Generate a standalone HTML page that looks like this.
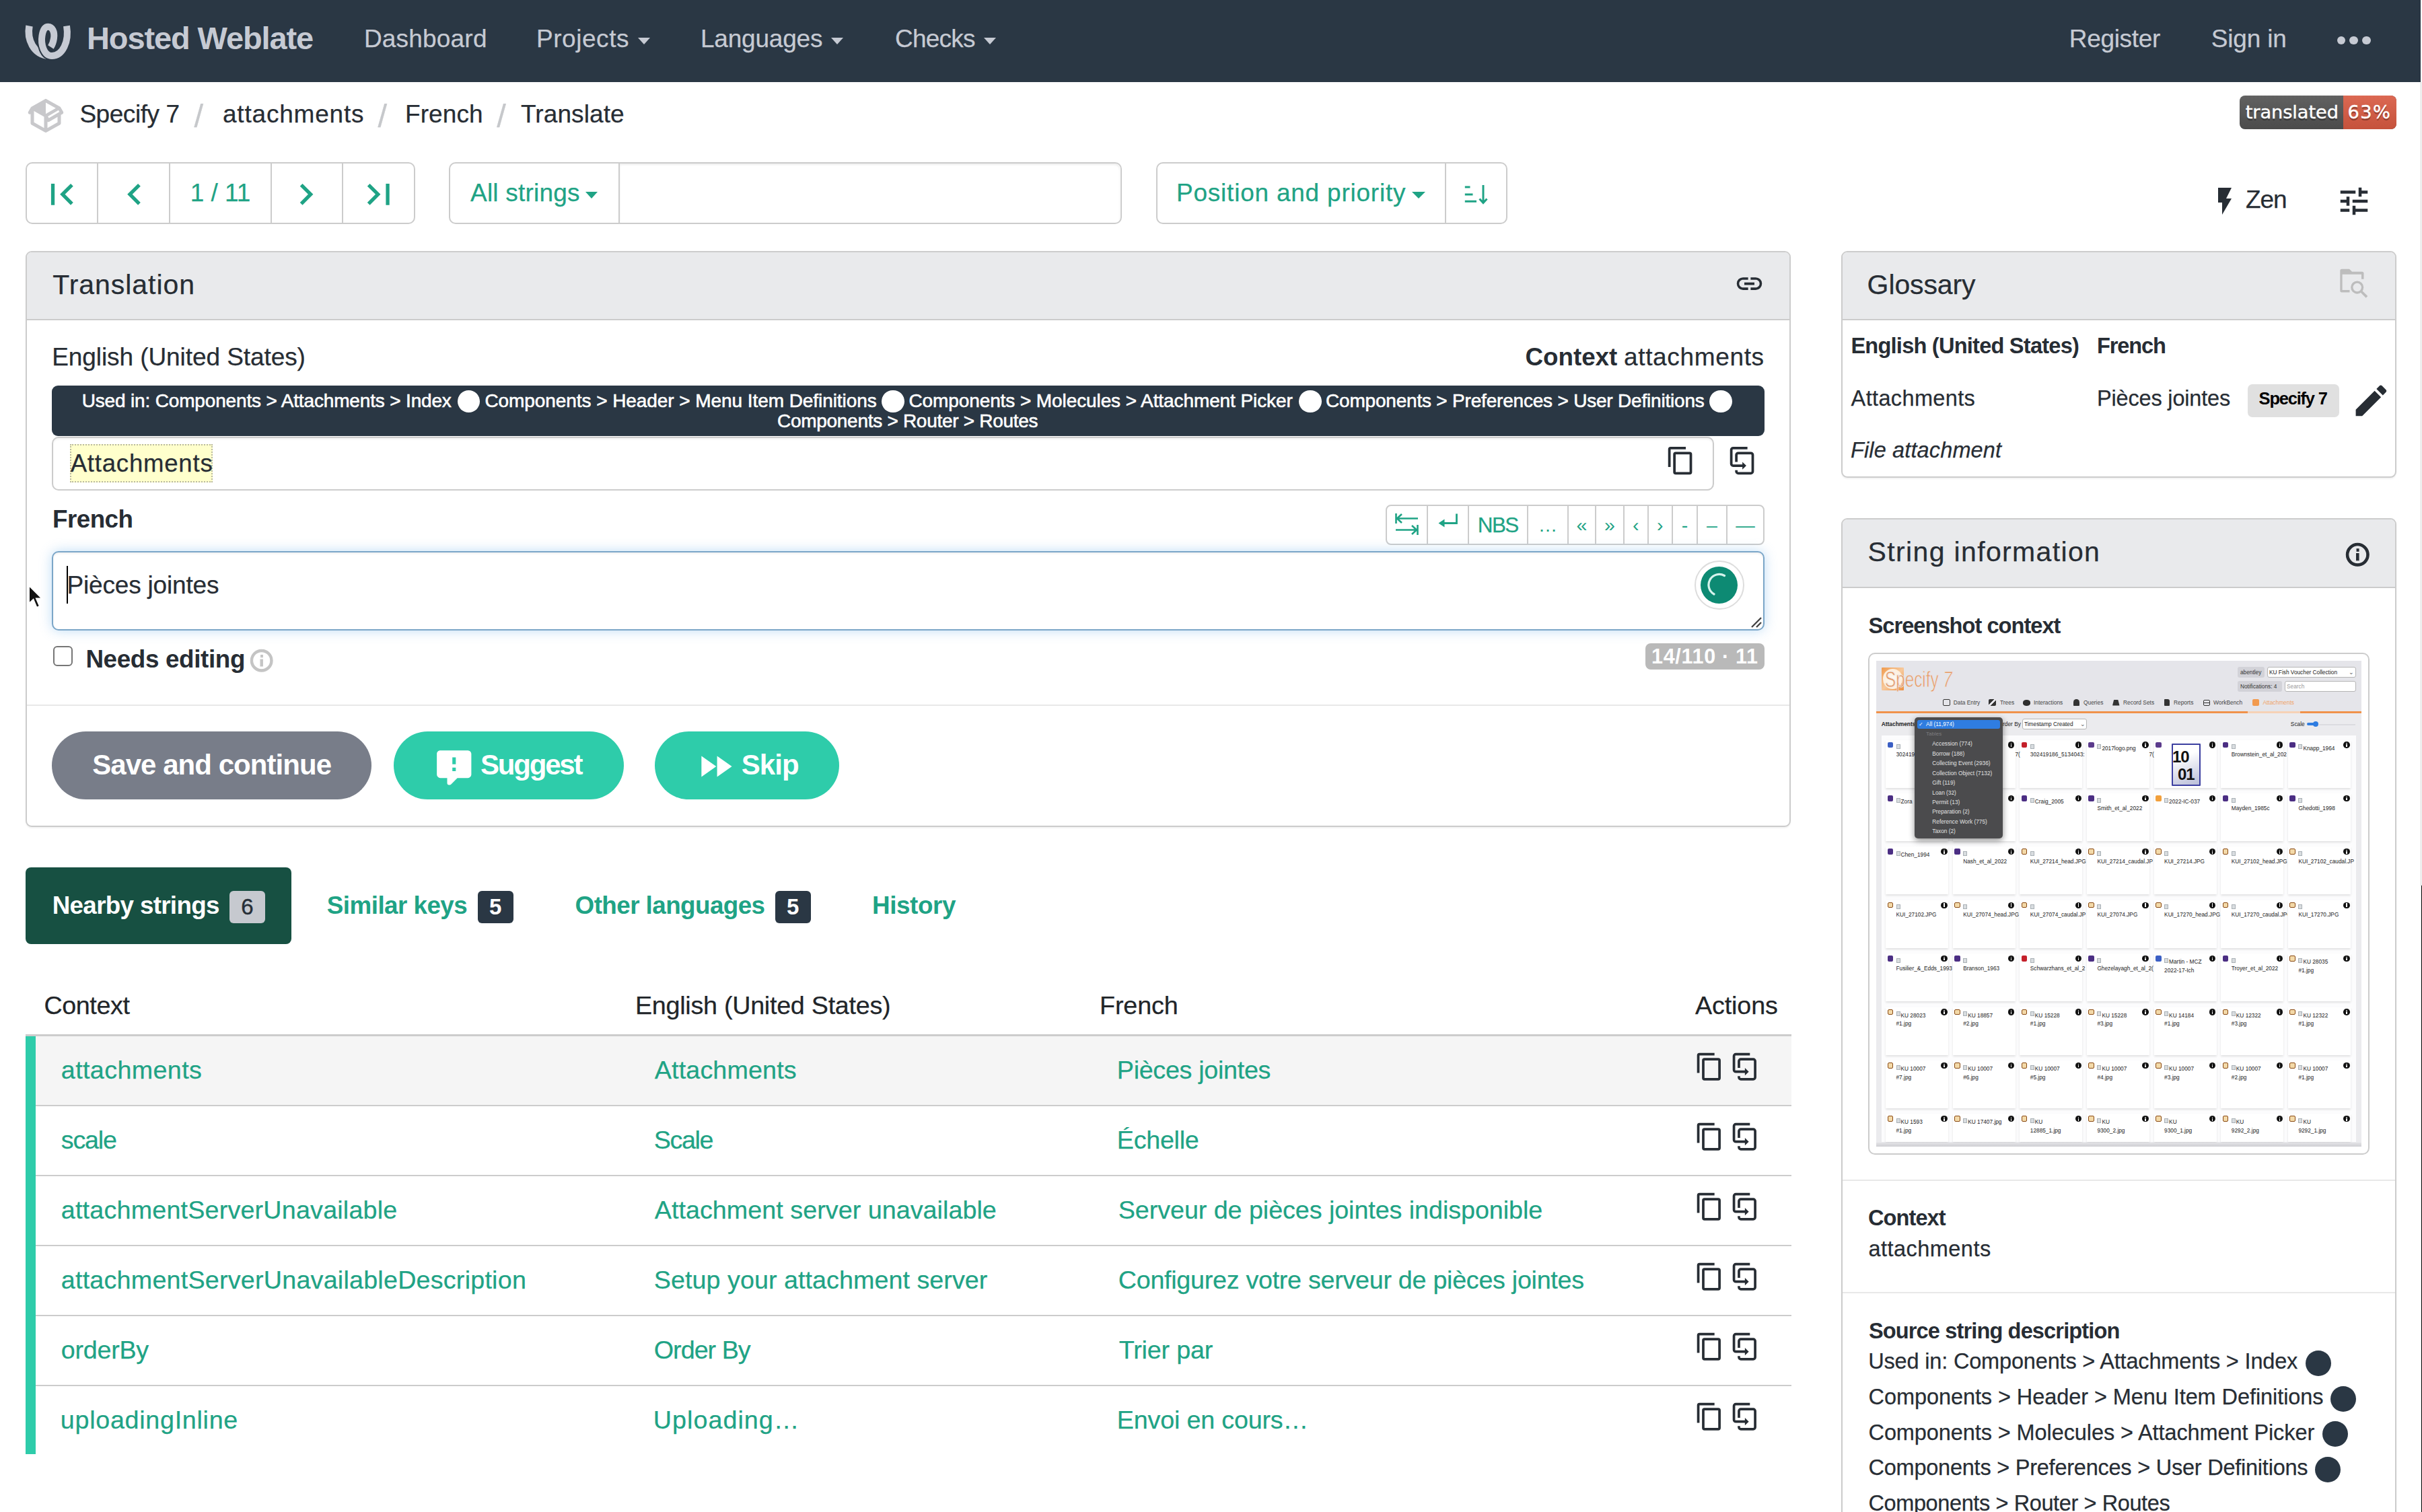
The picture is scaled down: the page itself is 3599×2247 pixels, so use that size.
<!DOCTYPE html><html lang="en"><head><meta charset="utf-8"><title>Specify 7/attachments — French @ Hosted Weblate</title><style>
html,body{margin:0;padding:0}
html{width:3599px;height:2247px;overflow:hidden}
body{width:3599px;height:2247px;position:relative;overflow:hidden;background:#fff;font-family:"Liberation Sans",sans-serif;color:#272d34}
#root{position:absolute;left:0;top:0;width:3599px;height:2247px;overflow:hidden}
.b{position:absolute;display:block}
.t{position:absolute;white-space:pre;display:block}
</style></head><body><div id="root"><div class="b" style="left:0.0px;top:0.0px;width:3597.0px;height:121.5px;background:#2a3744"></div><svg class="b" style="left:25px;top:20px" width="100" height="80" viewBox="0 0 100 80" fill="none" stroke-linecap="butt"><path d="M18.5,18.5 C15,38 24,61 48,63" stroke="#c6cad3" stroke-width="10.5"/><path d="M74,18.5 C78,42 68,63 52,63 C40,63 35.5,45 37.5,33 C39,24 42,19.8 46.5,19.8 C52.5,19.8 56.5,27 55,37 C54.3,42 53,46 50.5,50" stroke="#2a3744" stroke-width="14"/><path d="M74,18.5 C78,42 68,63 52,63 C40,63 35.5,45 37.5,33 C39,24 42,19.8 46.5,19.8 C52.5,19.8 56.5,27 55,37 C54.3,42 53,46 50.5,50" stroke="#c6cad3" stroke-width="10"/></svg><div class="b" style="left:948.0px;top:56.0px;width:0;height:0;border-left:9.5px solid transparent;border-right:9.5px solid transparent;border-top:10.0px solid #c6cad3"></div><div class="b" style="left:1234.5px;top:56.0px;width:0;height:0;border-left:9.5px solid transparent;border-right:9.5px solid transparent;border-top:10.0px solid #c6cad3"></div><div class="b" style="left:1462.0px;top:56.0px;width:0;height:0;border-left:9.5px solid transparent;border-right:9.5px solid transparent;border-top:10.0px solid #c6cad3"></div><div class="b" style="left:3472.7px;top:53.7px;width:12.6px;height:12.6px;background:#c6cad3;border-radius:50%"></div><div class="b" style="left:3491.3px;top:53.7px;width:12.6px;height:12.6px;background:#c6cad3;border-radius:50%"></div><div class="b" style="left:3510.1px;top:53.7px;width:12.6px;height:12.6px;background:#c6cad3;border-radius:50%"></div><svg class="b" style="left:37.9px;top:142.0px;" width="60.0" height="60.0" viewBox="0 0 24 24" fill="#c8c8cb"><path d="M2,10.96C1.5,10.68 1.35,10.07 1.63,9.59L3.13,7C3.24,6.8 3.41,6.66 3.6,6.58L11.43,2.18C11.59,2.06 11.79,2 12,2C12.21,2 12.41,2.06 12.57,2.18L20.47,6.62C20.66,6.72 20.82,6.88 20.91,7.08L22.36,9.6C22.64,10.08 22.47,10.69 22,10.96L21,11.54V16.5C21,16.88 20.79,17.21 20.47,17.38L12.57,21.82C12.41,21.94 12.21,22 12,22C11.79,22 11.59,21.94 11.43,21.82L3.53,17.38C3.21,17.21 3,16.88 3,16.5V10.96C2.7,11.13 2.32,11.14 2,10.96M12,4.15V4.15L12,10.85V10.85L17.96,7.5L12,4.15M5,15.91L11,19.29V12.58L5,9.21V15.91M19,15.91V12.69L14,15.59C13.67,15.77 13.3,15.76 13,15.6V19.29L19,15.91M13.85,13.36L20.13,9.73L19.55,8.72L13.27,12.35L13.85,13.36Z"/></svg><div class="b" style="left:3328px;top:142px;width:233px;height:49.5px;border-radius:8px;overflow:hidden;background:#555"><div style="position:absolute;left:154.3px;top:0;right:0;bottom:0;background:#e05d44"></div><div style="position:absolute;left:0;top:0;right:0;bottom:0;background:linear-gradient(rgba(187,187,187,.12),rgba(0,0,0,.12))"></div></div><div class="b" style="left:38.4px;top:240.5px;width:578.5px;height:92.5px;border:2px solid #ccc;border-radius:10px;background:#fff;box-sizing:border-box"></div><div class="b" style="left:144.0px;top:241.0px;width:2.0px;height:91.5px;background:#ccc"></div><div class="b" style="left:251.0px;top:241.0px;width:2.0px;height:91.5px;background:#ccc"></div><div class="b" style="left:401.6px;top:241.0px;width:2.0px;height:91.5px;background:#ccc"></div><div class="b" style="left:508.0px;top:241.0px;width:2.0px;height:91.5px;background:#ccc"></div><svg class="b" style="left:60.2px;top:256.5px;" width="63.6" height="63.6" viewBox="0 0 24 24" fill="#1fa385"><path d="M18.41,16.59L13.82,12L18.41,7.41L17,6L11,12L17,18L18.41,16.59M6,6H8V18H6V6Z"/></svg><svg class="b" style="left:167.9px;top:256.5px;" width="63.6" height="63.6" viewBox="0 0 24 24" fill="#1fa385"><path d="M15.41,16.58L10.83,12L15.41,7.41L14,6L8,12L14,18L15.41,16.58Z"/></svg><svg class="b" style="left:423.4px;top:256.5px;" width="63.6" height="63.6" viewBox="0 0 24 24" fill="#1fa385"><path d="M8.59,16.58L13.17,12L8.59,7.41L10,6L16,12L10,18L8.59,16.58Z"/></svg><svg class="b" style="left:531.2px;top:256.5px;" width="63.6" height="63.6" viewBox="0 0 24 24" fill="#1fa385"><path d="M5.59,7.41L10.18,12L5.59,16.59L7,18L13,12L7,6L5.59,7.41M16,6H18V18H16V6Z"/></svg><div class="b" style="left:667.0px;top:240.5px;width:999.5px;height:92.5px;border:2px solid #ccc;border-radius:10px;background:#fff;box-sizing:border-box"></div><div class="b" style="left:919.0px;top:241.0px;width:2.0px;height:91.5px;background:#ccc"></div><div class="b" style="left:921.0px;top:242.5px;width:743.0px;height:88.5px;border-radius:0 8px 8px 0;box-shadow:inset 0 2px 3px rgba(0,0,0,.075)"></div><div class="b" style="left:870.0px;top:284.5px;width:0;height:0;border-left:9.5px solid transparent;border-right:9.5px solid transparent;border-top:10.0px solid #1fa385"></div><div class="b" style="left:1717.8px;top:240.5px;width:522.5px;height:92.5px;border:2px solid #ccc;border-radius:10px;background:#fff;box-sizing:border-box"></div><div class="b" style="left:2147.0px;top:241.0px;width:2.0px;height:91.5px;background:#ccc"></div><div class="b" style="left:2098.0px;top:284.5px;width:0;height:0;border-left:10.0px solid transparent;border-right:10.0px solid transparent;border-top:10.0px solid #1fa385"></div><svg class="b" style="left:2170px;top:268px" width="50" height="42" viewBox="0 0 50 42" fill="none" stroke="#1fa385" stroke-width="3"><path d="M6.8,10H14.5M6.8,21H18.5M6.8,31.2H24"/><path d="M34,7V33M28.5,27.5L34,33.5L39.5,27.5" stroke-linejoin="miter"/></svg><svg class="b" style="left:3282.0px;top:275.2px;" width="48.0" height="48.0" viewBox="0 0 24 24" fill="#272d34"><path d="M7,2V13H10V22L17,10H13L17,2H7Z"/></svg><svg class="b" style="left:3471.3px;top:272.0px;" width="54.0" height="54.0" viewBox="0 0 24 24" fill="#272d34"><path d="M3,17V19H9V17H3M3,5V7H13V5H3M13,21V19H21V17H13V15H11V21H13M7,9V11H3V13H7V15H9V9H7M21,13V11H11V13H21M15,9H17V7H21V5H17V3H15V9Z"/></svg><div class="b" style="left:38.0px;top:372.5px;width:2623.0px;height:856.0px;border:2px solid #ccc;border-radius:9px;background:#fff;box-sizing:border-box;box-shadow:0 2px 2px rgba(0,0,0,.05)"></div><div class="b" style="left:40.0px;top:374.5px;width:2619.0px;height:99.0px;background:#e9eaec;border-radius:7px 7px 0 0"></div><div class="b" style="left:40.0px;top:473.5px;width:2619.0px;height:2.0px;background:#ccc"></div><svg class="b" style="left:2577.0px;top:398.8px;" width="45.0" height="45.0" viewBox="0 0 24 24" fill="#272d34"><path d="M3.9,12C3.9,10.29 5.29,8.9 7,8.9H11V7H7A5,5 0 0,0 2,12A5,5 0 0,0 7,17H11V15.1H7C5.29,15.1 3.9,13.71 3.9,12M8,13H16V11H8V13M17,7H13V8.9H17C18.71,8.9 20.1,10.29 20.1,12C20.1,13.71 18.71,15.1 17,15.1H13V17H17A5,5 0 0,0 22,12A5,5 0 0,0 17,7Z"/></svg><div class="b" style="left:77.0px;top:573.0px;width:2545.0px;height:75.0px;background:#2a3744;border-radius:9px"></div><div class="b" style="left:679.8px;top:579.7px;width:33.4px;height:33.4px;background:#fff;border-radius:50%"></div><div class="b" style="left:1310.3px;top:579.7px;width:33.4px;height:33.4px;background:#fff;border-radius:50%"></div><div class="b" style="left:1930.3px;top:579.7px;width:33.4px;height:33.4px;background:#fff;border-radius:50%"></div><div class="b" style="left:2540.3px;top:579.7px;width:33.4px;height:33.4px;background:#fff;border-radius:50%"></div><div class="b" style="left:77.0px;top:648.5px;width:2470.0px;height:80.0px;border:2px solid #ccc;border-radius:10px;background:#fff;box-sizing:border-box;box-shadow:inset 0 2px 3px rgba(0,0,0,.05)"></div><div class="b" style="left:104.2px;top:660.0px;width:211.8px;height:56.6px;background:#ffc;border:2px dotted #b9b9a0;box-sizing:border-box"></div><svg class="b" style="left:2474.9px;top:662.4px;" width="45.0" height="45.0" viewBox="0 0 24 24" fill="#272d34"><path d="M19,21H8V7H19M19,5H8A2,2 0 0,0 6,7V21A2,2 0 0,0 8,23H19A2,2 0 0,0 21,21V7A2,2 0 0,0 19,5M16,1H4A2,2 0 0,0 2,3V17H4V3H16V1Z"/></svg><svg class="b" style="left:2567.0px;top:662.4px;color:#272d34" width="45.0" height="45.0" viewBox="0 0 24 24" fill="#272d34"><g fill="none" stroke="currentColor" stroke-width="2" stroke-linejoin="round" stroke-linecap="butt"><path d="M15.8,2H4.5A1.5,1.5 0 0,0 3,3.5V14.5A1.5,1.5 0 0,0 4.5,16H13"/><path d="M7,13V7.5A1.5,1.5 0 0,1 8.5,6H18.5A1.5,1.5 0 0,1 20,7.5V20.5A1.5,1.5 0 0,1 18.5,22H8.5A1.5,1.5 0 0,1 7,20.5V19.6"/></g><path d="M11.8,13L14.9,16L11.8,19Z" fill="currentColor"/></svg><div class="b" style="left:2058.5px;top:749.5px;width:563.0px;height:60.5px;border:2px solid #ccc;border-radius:8px;background:#fff;box-sizing:border-box"></div><div class="b" style="left:2119.9px;top:750.5px;width:2.0px;height:58.5px;background:#ccc"></div><div class="b" style="left:2180.9px;top:750.5px;width:2.0px;height:58.5px;background:#ccc"></div><div class="b" style="left:2268.9px;top:750.5px;width:2.0px;height:58.5px;background:#ccc"></div><div class="b" style="left:2328.9px;top:750.5px;width:2.0px;height:58.5px;background:#ccc"></div><div class="b" style="left:2369.9px;top:750.5px;width:2.0px;height:58.5px;background:#ccc"></div><div class="b" style="left:2411.9px;top:750.5px;width:2.0px;height:58.5px;background:#ccc"></div><div class="b" style="left:2447.6px;top:750.5px;width:2.0px;height:58.5px;background:#ccc"></div><div class="b" style="left:2484.0px;top:750.5px;width:2.0px;height:58.5px;background:#ccc"></div><div class="b" style="left:2521.0px;top:750.5px;width:2.0px;height:58.5px;background:#ccc"></div><div class="b" style="left:2564.9px;top:750.5px;width:2.0px;height:58.5px;background:#ccc"></div><svg class="b" style="left:2070px;top:760px" width="42" height="38" viewBox="0 0 42 38" fill="none" stroke="#1fa385" stroke-width="2.6"><path d="M4.5,3V18M6,10.5H37M13,4L6,10.5L13,17"/><path d="M36.5,20V35M35,27.5H4M28,21L35,27.5L28,34"/></svg><svg class="b" style="left:2134px;top:760px" width="36" height="30" viewBox="0 0 36 30" fill="none" stroke="#1fa385" stroke-width="2.8"><path d="M30.5,3.5V17.5H6"/></svg><svg class="b" style="left:2134px;top:760px" width="36" height="30" viewBox="0 0 36 30" fill="#1fa385"><path d="M3.5,17.5L12.5,11.5V23.5Z"/></svg><div class="b" style="left:77.0px;top:818.5px;width:2544.5px;height:118.0px;border:2px solid #7ba6c8;border-radius:10px;background:#fff;box-sizing:border-box;box-shadow:inset 0 2px 3px rgba(0,0,0,.06),0 0 18px rgba(102,175,233,.42)"></div><div class="b" style="left:99.0px;top:841.0px;width:2.4px;height:56.0px;background:#000"></div><div class="b" style="left:2517.8px;top:832.5px;width:73.8px;height:73.8px;background:#fff;border:2px solid #ddd;border-radius:50%;box-sizing:border-box"></div><div class="b" style="left:2527.1px;top:841.8px;width:55.2px;height:55.2px;background:#0d8a73;border-radius:50%"></div><svg class="b" style="left:2527.1px;top:841.8px" width="55.2" height="55.2" viewBox="0 0 55.2 55.2" fill="none" stroke="#d5f3ec" stroke-width="3.2" stroke-linecap="round"><path d="M35.5,13.5A15.5,15.5 0 0,0 20,41"/></svg><svg class="b" style="left:2600px;top:915px" width="18" height="18" viewBox="0 0 18 18" stroke="#444" stroke-width="2.4"><path d="M3,17L17,3M10,17L17,10"/></svg><svg class="b" style="left:41px;top:868px" width="24" height="38" viewBox="0 0 24 38"><path d="M2,2V29L8.5,23L13.5,35L18,33L13,21.5H21.5Z" fill="#111" stroke="#fff" stroke-width="2"/></svg><div class="b" style="left:78.5px;top:960.0px;width:29.5px;height:29.5px;border:2.5px solid #767676;border-radius:6px;background:#fff;box-sizing:border-box"></div><svg class="b" style="left:368.5px;top:961.8px;stroke:#c4c4c4;stroke-width:0.7" width="39.4" height="39.4" viewBox="0 0 24 24" fill="#c4c4c4"><path d="M11,9H13V7H11M12,20C7.59,20 4,16.41 4,12C4,7.59 7.59,4 12,4C16.41,4 20,7.59 20,12C20,16.41 16.41,20 12,20M12,2A10,10 0 0,0 2,12A10,10 0 0,0 12,22A10,10 0 0,0 22,12A10,10 0 0,0 12,2M11,17H13V11H11V17Z"/></svg><div class="b" style="left:2445.0px;top:956.3px;width:177.0px;height:39.0px;background:#b9b9b9;border-radius:8px"></div><div class="b" style="left:40.0px;top:1046.8px;width:2619.0px;height:2.0px;background:#e8e8e8"></div><div class="b" style="left:76.8px;top:1086.8px;width:475.0px;height:101.5px;background:#787d89;border-radius:51px"></div><div class="b" style="left:585.0px;top:1086.8px;width:342.0px;height:101.5px;background:#2eccaa;border-radius:51px"></div><svg class="b" style="left:644.0px;top:1110.0px;" width="61.5" height="61.5" viewBox="0 0 24 24" fill="#fff"><path d="M13,10H11V6H13V10M13,14H11V12H13V14M9,22A1,1 0 0,1 8,21V18H4A2,2 0 0,1 2,16V4C2,2.89 2.9,2 4,2H20A2,2 0 0,1 22,4V16A2,2 0 0,1 20,18H13.9L10.2,21.71C10,21.9 9.75,22 9.5,22V22H9Z" fill-rule="evenodd"/></svg><div class="b" style="left:972.7px;top:1086.8px;width:274.6px;height:101.5px;background:#2eccaa;border-radius:51px"></div><svg class="b" style="left:1031.5px;top:1107.5px;" width="62.0" height="62.0" viewBox="0 0 24 24" fill="#fff"><path d="M13,6V18L21.5,12M4,18L12.5,12L4,6V18Z"/></svg><div class="b" style="left:37.8px;top:1289.0px;width:395.2px;height:113.6px;background:#175042;border-radius:8px"></div><div class="b" style="left:341.0px;top:1323.5px;width:53.0px;height:48.5px;background:#c6c9cf;border-radius:6px"></div><div class="b" style="left:710.0px;top:1323.5px;width:52.5px;height:48.5px;background:#2a3744;border-radius:6px"></div><div class="b" style="left:1152.0px;top:1323.5px;width:52.7px;height:48.5px;background:#2a3744;border-radius:6px"></div><div class="b" style="left:38.0px;top:1537.0px;width:2623.5px;height:3.0px;background:#ccc"></div><div class="b" style="left:53.0px;top:1540.0px;width:2608.5px;height:102.0px;background:#f5f5f5"></div><div class="b" style="left:38.0px;top:1641.8px;width:2623.5px;height:2.4px;background:#ccc"></div><div class="b" style="left:38.0px;top:1745.8px;width:2623.5px;height:2.4px;background:#ccc"></div><div class="b" style="left:38.0px;top:1849.8px;width:2623.5px;height:2.4px;background:#ccc"></div><div class="b" style="left:38.0px;top:1953.6px;width:2623.5px;height:2.4px;background:#ccc"></div><div class="b" style="left:38.0px;top:2057.6px;width:2623.5px;height:2.4px;background:#ccc"></div><div class="b" style="left:38.0px;top:1540.0px;width:15.0px;height:621.0px;background:#2eccaa"></div><svg class="b" style="left:2517.5px;top:1562.5px;" width="44.5" height="44.5" viewBox="0 0 24 24" fill="#272d34"><path d="M19,21H8V7H19M19,5H8A2,2 0 0,0 6,7V21A2,2 0 0,0 8,23H19A2,2 0 0,0 21,21V7A2,2 0 0,0 19,5M16,1H4A2,2 0 0,0 2,3V17H4V3H16V1Z"/></svg><svg class="b" style="left:2571.0px;top:1562.5px;color:#272d34" width="44.5" height="44.5" viewBox="0 0 24 24" fill="#272d34"><g fill="none" stroke="currentColor" stroke-width="2" stroke-linejoin="round" stroke-linecap="butt"><path d="M15.8,2H4.5A1.5,1.5 0 0,0 3,3.5V14.5A1.5,1.5 0 0,0 4.5,16H13"/><path d="M7,13V7.5A1.5,1.5 0 0,1 8.5,6H18.5A1.5,1.5 0 0,1 20,7.5V20.5A1.5,1.5 0 0,1 18.5,22H8.5A1.5,1.5 0 0,1 7,20.5V19.6"/></g><path d="M11.8,13L14.9,16L11.8,19Z" fill="currentColor"/></svg><svg class="b" style="left:2517.5px;top:1666.5px;" width="44.5" height="44.5" viewBox="0 0 24 24" fill="#272d34"><path d="M19,21H8V7H19M19,5H8A2,2 0 0,0 6,7V21A2,2 0 0,0 8,23H19A2,2 0 0,0 21,21V7A2,2 0 0,0 19,5M16,1H4A2,2 0 0,0 2,3V17H4V3H16V1Z"/></svg><svg class="b" style="left:2571.0px;top:1666.5px;color:#272d34" width="44.5" height="44.5" viewBox="0 0 24 24" fill="#272d34"><g fill="none" stroke="currentColor" stroke-width="2" stroke-linejoin="round" stroke-linecap="butt"><path d="M15.8,2H4.5A1.5,1.5 0 0,0 3,3.5V14.5A1.5,1.5 0 0,0 4.5,16H13"/><path d="M7,13V7.5A1.5,1.5 0 0,1 8.5,6H18.5A1.5,1.5 0 0,1 20,7.5V20.5A1.5,1.5 0 0,1 18.5,22H8.5A1.5,1.5 0 0,1 7,20.5V19.6"/></g><path d="M11.8,13L14.9,16L11.8,19Z" fill="currentColor"/></svg><svg class="b" style="left:2517.5px;top:1770.5px;" width="44.5" height="44.5" viewBox="0 0 24 24" fill="#272d34"><path d="M19,21H8V7H19M19,5H8A2,2 0 0,0 6,7V21A2,2 0 0,0 8,23H19A2,2 0 0,0 21,21V7A2,2 0 0,0 19,5M16,1H4A2,2 0 0,0 2,3V17H4V3H16V1Z"/></svg><svg class="b" style="left:2571.0px;top:1770.5px;color:#272d34" width="44.5" height="44.5" viewBox="0 0 24 24" fill="#272d34"><g fill="none" stroke="currentColor" stroke-width="2" stroke-linejoin="round" stroke-linecap="butt"><path d="M15.8,2H4.5A1.5,1.5 0 0,0 3,3.5V14.5A1.5,1.5 0 0,0 4.5,16H13"/><path d="M7,13V7.5A1.5,1.5 0 0,1 8.5,6H18.5A1.5,1.5 0 0,1 20,7.5V20.5A1.5,1.5 0 0,1 18.5,22H8.5A1.5,1.5 0 0,1 7,20.5V19.6"/></g><path d="M11.8,13L14.9,16L11.8,19Z" fill="currentColor"/></svg><svg class="b" style="left:2517.5px;top:1874.5px;" width="44.5" height="44.5" viewBox="0 0 24 24" fill="#272d34"><path d="M19,21H8V7H19M19,5H8A2,2 0 0,0 6,7V21A2,2 0 0,0 8,23H19A2,2 0 0,0 21,21V7A2,2 0 0,0 19,5M16,1H4A2,2 0 0,0 2,3V17H4V3H16V1Z"/></svg><svg class="b" style="left:2571.0px;top:1874.5px;color:#272d34" width="44.5" height="44.5" viewBox="0 0 24 24" fill="#272d34"><g fill="none" stroke="currentColor" stroke-width="2" stroke-linejoin="round" stroke-linecap="butt"><path d="M15.8,2H4.5A1.5,1.5 0 0,0 3,3.5V14.5A1.5,1.5 0 0,0 4.5,16H13"/><path d="M7,13V7.5A1.5,1.5 0 0,1 8.5,6H18.5A1.5,1.5 0 0,1 20,7.5V20.5A1.5,1.5 0 0,1 18.5,22H8.5A1.5,1.5 0 0,1 7,20.5V19.6"/></g><path d="M11.8,13L14.9,16L11.8,19Z" fill="currentColor"/></svg><svg class="b" style="left:2517.5px;top:1978.5px;" width="44.5" height="44.5" viewBox="0 0 24 24" fill="#272d34"><path d="M19,21H8V7H19M19,5H8A2,2 0 0,0 6,7V21A2,2 0 0,0 8,23H19A2,2 0 0,0 21,21V7A2,2 0 0,0 19,5M16,1H4A2,2 0 0,0 2,3V17H4V3H16V1Z"/></svg><svg class="b" style="left:2571.0px;top:1978.5px;color:#272d34" width="44.5" height="44.5" viewBox="0 0 24 24" fill="#272d34"><g fill="none" stroke="currentColor" stroke-width="2" stroke-linejoin="round" stroke-linecap="butt"><path d="M15.8,2H4.5A1.5,1.5 0 0,0 3,3.5V14.5A1.5,1.5 0 0,0 4.5,16H13"/><path d="M7,13V7.5A1.5,1.5 0 0,1 8.5,6H18.5A1.5,1.5 0 0,1 20,7.5V20.5A1.5,1.5 0 0,1 18.5,22H8.5A1.5,1.5 0 0,1 7,20.5V19.6"/></g><path d="M11.8,13L14.9,16L11.8,19Z" fill="currentColor"/></svg><svg class="b" style="left:2517.5px;top:2082.5px;" width="44.5" height="44.5" viewBox="0 0 24 24" fill="#272d34"><path d="M19,21H8V7H19M19,5H8A2,2 0 0,0 6,7V21A2,2 0 0,0 8,23H19A2,2 0 0,0 21,21V7A2,2 0 0,0 19,5M16,1H4A2,2 0 0,0 2,3V17H4V3H16V1Z"/></svg><svg class="b" style="left:2571.0px;top:2082.5px;color:#272d34" width="44.5" height="44.5" viewBox="0 0 24 24" fill="#272d34"><g fill="none" stroke="currentColor" stroke-width="2" stroke-linejoin="round" stroke-linecap="butt"><path d="M15.8,2H4.5A1.5,1.5 0 0,0 3,3.5V14.5A1.5,1.5 0 0,0 4.5,16H13"/><path d="M7,13V7.5A1.5,1.5 0 0,1 8.5,6H18.5A1.5,1.5 0 0,1 20,7.5V20.5A1.5,1.5 0 0,1 18.5,22H8.5A1.5,1.5 0 0,1 7,20.5V19.6"/></g><path d="M11.8,13L14.9,16L11.8,19Z" fill="currentColor"/></svg><div class="b" style="left:2736.0px;top:372.5px;width:825.0px;height:337.5px;border:2px solid #ccc;border-radius:9px;background:#fff;box-sizing:border-box;box-shadow:0 2px 2px rgba(0,0,0,.05)"></div><div class="b" style="left:2738.0px;top:374.5px;width:821.0px;height:99.0px;background:#e9eaec;border-radius:7px 7px 0 0"></div><div class="b" style="left:2738.0px;top:473.5px;width:821.0px;height:2.0px;background:#ccc"></div><svg class="b" style="left:3474px;top:396px" width="48" height="48" viewBox="0 0 48 48" fill="none" stroke="#bdbdbd"><path fill="#bdbdbd" stroke="none" d="M3.3,6.2A2.5,2.5 0 0,1 5.8,3.7H17L21,7.7H36A2.5,2.5 0 0,1 38.5,10.2V18.7H35V11.7H6.6V35H17.5V38.4H5.8A2.5,2.5 0 0,1 3.3,35.9Z"/><circle cx="28.7" cy="31.1" r="7.9" stroke-width="3.3"/><path d="M34.3,36.7L43,45.4" stroke-width="3.7"/></svg><div class="b" style="left:3340.2px;top:570.8px;width:135.8px;height:49.0px;background:#e0e0e0;border-radius:7px"></div><svg class="b" style="left:3492.7px;top:564.6px;" width="60.8" height="60.8" viewBox="0 0 24 24" fill="#272d34"><path d="M20.71,7.04C21.1,6.65 21.1,6 20.71,5.63L18.37,3.29C18,2.9 17.35,2.9 16.96,3.29L15.12,5.12L18.87,8.87M3,17.25V21H6.75L17.81,9.93L14.06,6.18L3,17.25Z"/></svg><div class="b" style="left:2736.0px;top:770.0px;width:825.0px;height:1477.0px;border:2px solid #ccc;border-radius:9px;background:#fff;box-sizing:border-box;box-shadow:0 2px 2px rgba(0,0,0,.05);border-bottom:none;border-radius:9px 9px 0 0"></div><div class="b" style="left:2738.0px;top:772.0px;width:821.0px;height:100.0px;background:#e9eaec;border-radius:7px 7px 0 0"></div><div class="b" style="left:2738.0px;top:872.0px;width:821.0px;height:2.0px;background:#ccc"></div><svg class="b" style="left:3483.1px;top:804.1px;stroke:#272d34;stroke-width:0.7" width="40.6" height="40.6" viewBox="0 0 24 24" fill="#272d34"><path d="M11,9H13V7H11M12,20C7.59,20 4,16.41 4,12C4,7.59 7.59,4 12,4C16.41,4 20,7.59 20,12C20,16.41 16.41,20 12,20M12,2A10,10 0 0,0 2,12A10,10 0 0,0 12,22A10,10 0 0,0 22,12A10,10 0 0,0 12,2M11,17H13V11H11V17Z"/></svg><div class="b" style="left:2776.0px;top:970.0px;width:745.0px;height:746.0px;border:2px solid #ccc;border-radius:10px;background:#fff;box-sizing:border-box"></div><div class="b" style="left:2788px;top:982px;width:721px;height:722px;overflow:hidden;background:#ebebee;font-family:"Liberation Sans",sans-serif;"><div style="position:absolute;left:0.0px;top:0.0px;width:721.0px;height:76.0px;background:#e5e5ea"></div><div style="position:absolute;left:0.0px;top:78.0px;width:721.0px;height:644.0px;background:#ebebee"></div><div style="position:absolute;left:7.7px;top:10.0px;width:33.7px;height:34.0px;background:linear-gradient(135deg,#f09a4c,#f7c99c 50%,#ee8f3f);border-radius:1px"></div><div style="position:absolute;left:9.7px;top:12.0px;width:29.7px;height:30.0px;background:radial-gradient(circle,#fffaf3 0,#fdeedd 70%,#f9dcbd 100%);border-radius:50%"></div><span style="position:absolute;left:13.0px;top:8.5px;font-size:33px;line-height:38px;color:#e8935a;white-space:pre;transform-origin:0 50%;transform:scaleX(.735);-webkit-text-stroke:0.9px #e9e4e2">Specify <i>7</i></span><div style="position:absolute;left:537.0px;top:8.7px;width:40.0px;height:16.5px;background:#d2d2d8;border-radius:3px"></div><span style="position:absolute;left:541.0px;top:12.0px;font-size:8.3px;line-height:10.0px;color:#333;white-space:pre;">abentley</span><div style="position:absolute;left:581.0px;top:8.7px;width:132.0px;height:16.5px;background:#fff;border:1px solid #b5b5b5;border-radius:3px;box-sizing:border-box"></div><span style="position:absolute;left:584.0px;top:12.0px;font-size:8.3px;line-height:10.0px;color:#222;white-space:pre;">KU Fish Voucher Collection</span><span style="position:absolute;left:702.0px;top:11.6px;font-size:9px;line-height:10.8px;color:#555;white-space:pre;">⌄</span><div style="position:absolute;left:537.0px;top:29.5px;width:66.0px;height:16.5px;background:#d2d2d8;border-radius:3px"></div><span style="position:absolute;left:541.0px;top:32.8px;font-size:8.3px;line-height:10.0px;color:#333;white-space:pre;">Notifications: 4</span><div style="position:absolute;left:607.0px;top:29.5px;width:106.0px;height:16.5px;background:#fff;border:1px solid #b5b5b5;border-radius:3px;box-sizing:border-box"></div><span style="position:absolute;left:610.0px;top:32.8px;font-size:8.3px;line-height:10.0px;color:#999;white-space:pre;">Search</span><div style="position:absolute;left:99.0px;top:57.0px;width:10.5px;height:10.0px;border:1.6px solid #333;border-radius:2px;box-sizing:border-box;background:transparent"></div><span style="position:absolute;left:114.7px;top:57.0px;font-size:8.4px;line-height:10.1px;color:#444;white-space:pre;">Data Entry</span><div style="position:absolute;left:167.0px;top:57.0px;width:10.5px;height:10.0px;background:linear-gradient(135deg,#333 0 42%,transparent 42% 58%,#333 58%);border-radius:2px"></div><span style="position:absolute;left:184.0px;top:57.0px;font-size:8.4px;line-height:10.1px;color:#444;white-space:pre;">Trees</span><div style="position:absolute;left:218.0px;top:57.0px;width:10.5px;height:8.5px;background:#2e2e2e;border-radius:50%/45%;top:58.0px"></div><span style="position:absolute;left:234.0px;top:57.0px;font-size:8.4px;line-height:10.1px;color:#444;white-space:pre;">Interactions</span><div style="position:absolute;left:292.6px;top:57.0px;width:9.0px;height:10.0px;background:#333;border-radius:5px 5px 1px 1px"></div><span style="position:absolute;left:308.0px;top:57.0px;font-size:8.4px;line-height:10.1px;color:#444;white-space:pre;">Queries</span><div style="position:absolute;left:351.0px;top:57.0px;width:10.5px;height:8.5px;background:#333;border-radius:3px 3px 1px 1px;clip-path:polygon(20% 0,80% 0,100% 100%,0 100%);top:58.0px"></div><span style="position:absolute;left:367.0px;top:57.0px;font-size:8.4px;line-height:10.1px;color:#444;white-space:pre;">Record Sets</span><div style="position:absolute;left:427.6px;top:57.0px;width:8.0px;height:10.0px;background:#333;border-radius:1px 3px 1px 1px"></div><span style="position:absolute;left:442.0px;top:57.0px;font-size:8.4px;line-height:10.1px;color:#444;white-space:pre;">Reports</span><div style="position:absolute;left:485.6px;top:57.0px;width:10.5px;height:8.5px;border:1.6px solid #333;border-radius:2px;box-sizing:border-box;background:linear-gradient(#333,#333) 50% 50%/100% 1.4px no-repeat;top:58.0px"></div><span style="position:absolute;left:501.0px;top:57.0px;font-size:8.4px;line-height:10.1px;color:#444;white-space:pre;">WorkBench</span><div style="position:absolute;left:558.7px;top:57.0px;width:10.0px;height:10.0px;background:#f29a4e;border-radius:2px"></div><span style="position:absolute;left:574.4px;top:57.0px;font-size:8.4px;line-height:10.1px;color:#f0a468;white-space:pre;">Attachments</span><div style="position:absolute;left:0.0px;top:75.0px;width:721.0px;height:3.0px;background:#f0924a"></div><div style="position:absolute;left:552.0px;top:75.0px;width:78.0px;height:3.0px;background:#f6d2b6"></div><span style="position:absolute;left:7.7px;top:89.0px;font-size:8.4px;line-height:10.1px;color:#222;white-space:pre;font-weight:700">Attachments</span><span style="position:absolute;left:188.0px;top:89.0px;font-size:8.4px;line-height:10.1px;color:#222;white-space:pre;">rder By</span><div style="position:absolute;left:217.0px;top:86.0px;width:96.0px;height:16.0px;background:#fff;border:1px solid #b5b5b5;border-radius:3px;box-sizing:border-box"></div><span style="position:absolute;left:220.0px;top:89.0px;font-size:8.3px;line-height:10.0px;color:#222;white-space:pre;">Timestamp Created</span><span style="position:absolute;left:303.0px;top:88.6px;font-size:9px;line-height:10.8px;color:#555;white-space:pre;">⌄</span><span style="position:absolute;left:615.8px;top:89.0px;font-size:8.4px;line-height:10.1px;color:#222;white-space:pre;">Scale</span><div style="position:absolute;left:658.0px;top:94.0px;width:54.0px;height:1.5px;background:#dcdce0"></div><div style="position:absolute;left:640.0px;top:92.0px;width:14.0px;height:4.0px;background:#2f7de1;border-radius:2px"></div><div style="position:absolute;left:649.0px;top:90.0px;width:8.0px;height:8.0px;background:#2f7de1;border-radius:50%"></div><div style="position:absolute;left:7.7px;top:111.4px;width:705.5px;height:604.0px;background:#fcfcfd"></div><div style="position:absolute;left:14.0px;top:117.6px;width:93.0px;height:71.0px;background:#fff;box-shadow:0 2px 3px rgba(0,0,0,.11)"></div><div style="position:absolute;left:16.5px;top:120.6px;width:8.5px;height:8.5px;background:#3b5fc4;border-radius:2px"></div><div style="position:absolute;left:96.3px;top:120.3px;width:9.4px;height:9.4px;background:#111;border-radius:50%"></div><div style="position:absolute;left:100.4px;top:122.2px;width:1.3px;height:1.3px;background:#fff"></div><div style="position:absolute;left:100.4px;top:124.2px;width:1.3px;height:3.6px;background:#fff"></div><div style="position:absolute;left:29.5px;top:124.1px;width:6.0px;height:7.0px;background:#d9dde0;border:1px solid #a9b0b5;box-sizing:border-box"></div><span style="position:absolute;left:29.5px;top:134.1px;width:83.5px;overflow:hidden;font-size:8.3px;line-height:10px;color:#222;white-space:pre">302419</span><div style="position:absolute;left:113.7px;top:117.6px;width:93.0px;height:71.0px;background:#fff;box-shadow:0 2px 3px rgba(0,0,0,.11)"></div><div style="position:absolute;left:196.0px;top:120.3px;width:9.4px;height:9.4px;background:#111;border-radius:50%"></div><div style="position:absolute;left:200.1px;top:122.2px;width:1.3px;height:1.3px;background:#fff"></div><div style="position:absolute;left:200.1px;top:124.2px;width:1.3px;height:3.6px;background:#fff"></div><div style="position:absolute;left:213.3px;top:117.6px;width:93.0px;height:71.0px;background:#fff;box-shadow:0 2px 3px rgba(0,0,0,.11)"></div><div style="position:absolute;left:215.8px;top:120.6px;width:8.5px;height:8.5px;background:#c4202b;border-radius:2px"></div><div style="position:absolute;left:295.6px;top:120.3px;width:9.4px;height:9.4px;background:#111;border-radius:50%"></div><div style="position:absolute;left:299.7px;top:122.2px;width:1.3px;height:1.3px;background:#fff"></div><div style="position:absolute;left:299.7px;top:124.2px;width:1.3px;height:3.6px;background:#fff"></div><div style="position:absolute;left:228.8px;top:124.1px;width:6.0px;height:7.0px;background:#d9dde0;border:1px solid #a9b0b5;box-sizing:border-box"></div><span style="position:absolute;left:228.8px;top:134.1px;width:83.5px;overflow:hidden;font-size:8.3px;line-height:10px;color:#222;white-space:pre">302419186_5134043:</span><div style="position:absolute;left:312.9px;top:117.6px;width:93.0px;height:71.0px;background:#fff;box-shadow:0 2px 3px rgba(0,0,0,.11)"></div><div style="position:absolute;left:315.4px;top:120.6px;width:8.5px;height:8.5px;background:#5b3b8c;border-radius:2px"></div><div style="position:absolute;left:395.2px;top:120.3px;width:9.4px;height:9.4px;background:#111;border-radius:50%"></div><div style="position:absolute;left:399.3px;top:122.2px;width:1.3px;height:1.3px;background:#fff"></div><div style="position:absolute;left:399.3px;top:124.2px;width:1.3px;height:3.6px;background:#fff"></div><div style="position:absolute;left:328.4px;top:124.1px;width:6.0px;height:7.0px;background:#d9dde0;border:1px solid #a9b0b5;box-sizing:border-box"></div><span style="position:absolute;left:335.4px;top:124.6px;font-size:8.3px;line-height:10.0px;color:#222;white-space:pre;">2017logo.png</span><div style="position:absolute;left:412.6px;top:117.6px;width:93.0px;height:71.0px;background:#fff;box-shadow:0 2px 3px rgba(0,0,0,.11)"></div><div style="position:absolute;left:415.1px;top:120.6px;width:8.5px;height:8.5px;background:#5b3b8c;border-radius:2px"></div><div style="position:absolute;left:494.9px;top:120.3px;width:9.4px;height:9.4px;background:#111;border-radius:50%"></div><div style="position:absolute;left:499.0px;top:122.2px;width:1.3px;height:1.3px;background:#fff"></div><div style="position:absolute;left:499.0px;top:124.2px;width:1.3px;height:3.6px;background:#fff"></div><div style="position:absolute;left:512.2px;top:117.6px;width:93.0px;height:71.0px;background:#fff;box-shadow:0 2px 3px rgba(0,0,0,.11)"></div><div style="position:absolute;left:514.8px;top:120.6px;width:8.5px;height:8.5px;background:#4b2e83;border-radius:2px"></div><div style="position:absolute;left:594.6px;top:120.3px;width:9.4px;height:9.4px;background:#111;border-radius:50%"></div><div style="position:absolute;left:598.7px;top:122.2px;width:1.3px;height:1.3px;background:#fff"></div><div style="position:absolute;left:598.7px;top:124.2px;width:1.3px;height:3.6px;background:#fff"></div><div style="position:absolute;left:527.8px;top:124.1px;width:6.0px;height:7.0px;background:#d9dde0;border:1px solid #a9b0b5;box-sizing:border-box"></div><span style="position:absolute;left:527.8px;top:134.1px;width:83.5px;overflow:hidden;font-size:8.3px;line-height:10px;color:#222;white-space:pre">Brownstein_et_al_202</span><div style="position:absolute;left:611.9px;top:117.6px;width:93.0px;height:71.0px;background:#fff;box-shadow:0 2px 3px rgba(0,0,0,.11)"></div><div style="position:absolute;left:614.4px;top:120.6px;width:8.5px;height:8.5px;background:#4b2e83;border-radius:2px"></div><div style="position:absolute;left:694.2px;top:120.3px;width:9.4px;height:9.4px;background:#111;border-radius:50%"></div><div style="position:absolute;left:698.3px;top:122.2px;width:1.3px;height:1.3px;background:#fff"></div><div style="position:absolute;left:698.3px;top:124.2px;width:1.3px;height:3.6px;background:#fff"></div><div style="position:absolute;left:627.4px;top:124.1px;width:6.0px;height:7.0px;background:#d9dde0;border:1px solid #a9b0b5;box-sizing:border-box"></div><span style="position:absolute;left:634.4px;top:124.6px;font-size:8.3px;line-height:10.0px;color:#222;white-space:pre;">Knapp_1964</span><div style="position:absolute;left:14.0px;top:197.0px;width:93.0px;height:71.0px;background:#fff;box-shadow:0 2px 3px rgba(0,0,0,.11)"></div><div style="position:absolute;left:16.5px;top:200.0px;width:8.5px;height:8.5px;background:#4b2e83;border-radius:2px"></div><div style="position:absolute;left:96.3px;top:199.7px;width:9.4px;height:9.4px;background:#111;border-radius:50%"></div><div style="position:absolute;left:100.4px;top:201.6px;width:1.3px;height:1.3px;background:#fff"></div><div style="position:absolute;left:100.4px;top:203.6px;width:1.3px;height:3.6px;background:#fff"></div><div style="position:absolute;left:29.5px;top:203.5px;width:6.0px;height:7.0px;background:#d9dde0;border:1px solid #a9b0b5;box-sizing:border-box"></div><span style="position:absolute;left:36.5px;top:204.0px;font-size:8.3px;line-height:10.0px;color:#222;white-space:pre;">Zora</span><div style="position:absolute;left:113.7px;top:197.0px;width:93.0px;height:71.0px;background:#fff;box-shadow:0 2px 3px rgba(0,0,0,.11)"></div><div style="position:absolute;left:196.0px;top:199.7px;width:9.4px;height:9.4px;background:#111;border-radius:50%"></div><div style="position:absolute;left:200.1px;top:201.6px;width:1.3px;height:1.3px;background:#fff"></div><div style="position:absolute;left:200.1px;top:203.6px;width:1.3px;height:3.6px;background:#fff"></div><div style="position:absolute;left:213.3px;top:197.0px;width:93.0px;height:71.0px;background:#fff;box-shadow:0 2px 3px rgba(0,0,0,.11)"></div><div style="position:absolute;left:215.8px;top:200.0px;width:8.5px;height:8.5px;background:#4b2e83;border-radius:2px"></div><div style="position:absolute;left:295.6px;top:199.7px;width:9.4px;height:9.4px;background:#111;border-radius:50%"></div><div style="position:absolute;left:299.7px;top:201.6px;width:1.3px;height:1.3px;background:#fff"></div><div style="position:absolute;left:299.7px;top:203.6px;width:1.3px;height:3.6px;background:#fff"></div><div style="position:absolute;left:228.8px;top:203.5px;width:6.0px;height:7.0px;background:#d9dde0;border:1px solid #a9b0b5;box-sizing:border-box"></div><span style="position:absolute;left:235.8px;top:204.0px;font-size:8.3px;line-height:10.0px;color:#222;white-space:pre;">Craig_2005</span><div style="position:absolute;left:312.9px;top:197.0px;width:93.0px;height:71.0px;background:#fff;box-shadow:0 2px 3px rgba(0,0,0,.11)"></div><div style="position:absolute;left:315.4px;top:200.0px;width:8.5px;height:8.5px;background:#4b2e83;border-radius:2px"></div><div style="position:absolute;left:395.2px;top:199.7px;width:9.4px;height:9.4px;background:#111;border-radius:50%"></div><div style="position:absolute;left:399.3px;top:201.6px;width:1.3px;height:1.3px;background:#fff"></div><div style="position:absolute;left:399.3px;top:203.6px;width:1.3px;height:3.6px;background:#fff"></div><div style="position:absolute;left:328.4px;top:203.5px;width:6.0px;height:7.0px;background:#d9dde0;border:1px solid #a9b0b5;box-sizing:border-box"></div><span style="position:absolute;left:328.4px;top:213.5px;width:83.5px;overflow:hidden;font-size:8.3px;line-height:10px;color:#222;white-space:pre">Smith_et_al_2022</span><div style="position:absolute;left:412.6px;top:197.0px;width:93.0px;height:71.0px;background:#fff;box-shadow:0 2px 3px rgba(0,0,0,.11)"></div><div style="position:absolute;left:415.1px;top:200.0px;width:8.5px;height:8.5px;background:#f2a03c;border-radius:2px"></div><div style="position:absolute;left:494.9px;top:199.7px;width:9.4px;height:9.4px;background:#111;border-radius:50%"></div><div style="position:absolute;left:499.0px;top:201.6px;width:1.3px;height:1.3px;background:#fff"></div><div style="position:absolute;left:499.0px;top:203.6px;width:1.3px;height:3.6px;background:#fff"></div><div style="position:absolute;left:428.1px;top:203.5px;width:6.0px;height:7.0px;background:#d9dde0;border:1px solid #a9b0b5;box-sizing:border-box"></div><span style="position:absolute;left:435.1px;top:204.0px;font-size:8.3px;line-height:10.0px;color:#222;white-space:pre;">2022-IC-037</span><div style="position:absolute;left:512.2px;top:197.0px;width:93.0px;height:71.0px;background:#fff;box-shadow:0 2px 3px rgba(0,0,0,.11)"></div><div style="position:absolute;left:514.8px;top:200.0px;width:8.5px;height:8.5px;background:#4b2e83;border-radius:2px"></div><div style="position:absolute;left:594.6px;top:199.7px;width:9.4px;height:9.4px;background:#111;border-radius:50%"></div><div style="position:absolute;left:598.7px;top:201.6px;width:1.3px;height:1.3px;background:#fff"></div><div style="position:absolute;left:598.7px;top:203.6px;width:1.3px;height:3.6px;background:#fff"></div><div style="position:absolute;left:527.8px;top:203.5px;width:6.0px;height:7.0px;background:#d9dde0;border:1px solid #a9b0b5;box-sizing:border-box"></div><span style="position:absolute;left:527.8px;top:213.5px;width:83.5px;overflow:hidden;font-size:8.3px;line-height:10px;color:#222;white-space:pre">Mayden_1985c</span><div style="position:absolute;left:611.9px;top:197.0px;width:93.0px;height:71.0px;background:#fff;box-shadow:0 2px 3px rgba(0,0,0,.11)"></div><div style="position:absolute;left:614.4px;top:200.0px;width:8.5px;height:8.5px;background:#4b2e83;border-radius:2px"></div><div style="position:absolute;left:694.2px;top:199.7px;width:9.4px;height:9.4px;background:#111;border-radius:50%"></div><div style="position:absolute;left:698.3px;top:201.6px;width:1.3px;height:1.3px;background:#fff"></div><div style="position:absolute;left:698.3px;top:203.6px;width:1.3px;height:3.6px;background:#fff"></div><div style="position:absolute;left:627.4px;top:203.5px;width:6.0px;height:7.0px;background:#d9dde0;border:1px solid #a9b0b5;box-sizing:border-box"></div><span style="position:absolute;left:627.4px;top:213.5px;width:83.5px;overflow:hidden;font-size:8.3px;line-height:10px;color:#222;white-space:pre">Ghedotti_1998</span><div style="position:absolute;left:14.0px;top:276.4px;width:93.0px;height:71.0px;background:#fff;box-shadow:0 2px 3px rgba(0,0,0,.11)"></div><div style="position:absolute;left:16.5px;top:279.4px;width:8.5px;height:8.5px;background:#4b2e83;border-radius:2px"></div><div style="position:absolute;left:96.3px;top:279.1px;width:9.4px;height:9.4px;background:#111;border-radius:50%"></div><div style="position:absolute;left:100.4px;top:281.0px;width:1.3px;height:1.3px;background:#fff"></div><div style="position:absolute;left:100.4px;top:283.0px;width:1.3px;height:3.6px;background:#fff"></div><div style="position:absolute;left:29.5px;top:282.9px;width:6.0px;height:7.0px;background:#d9dde0;border:1px solid #a9b0b5;box-sizing:border-box"></div><span style="position:absolute;left:36.5px;top:283.4px;font-size:8.3px;line-height:10.0px;color:#222;white-space:pre;">Chen_1994</span><div style="position:absolute;left:113.7px;top:276.4px;width:93.0px;height:71.0px;background:#fff;box-shadow:0 2px 3px rgba(0,0,0,.11)"></div><div style="position:absolute;left:116.2px;top:279.4px;width:8.5px;height:8.5px;background:#4b2e83;border-radius:2px"></div><div style="position:absolute;left:196.0px;top:279.1px;width:9.4px;height:9.4px;background:#111;border-radius:50%"></div><div style="position:absolute;left:200.1px;top:281.0px;width:1.3px;height:1.3px;background:#fff"></div><div style="position:absolute;left:200.1px;top:283.0px;width:1.3px;height:3.6px;background:#fff"></div><div style="position:absolute;left:129.2px;top:282.9px;width:6.0px;height:7.0px;background:#d9dde0;border:1px solid #a9b0b5;box-sizing:border-box"></div><span style="position:absolute;left:129.2px;top:292.9px;width:83.5px;overflow:hidden;font-size:8.3px;line-height:10px;color:#222;white-space:pre">Nash_et_al_2022</span><div style="position:absolute;left:213.3px;top:276.4px;width:93.0px;height:71.0px;background:#fff;box-shadow:0 2px 3px rgba(0,0,0,.11)"></div><div style="position:absolute;left:215.8px;top:279.4px;width:8.5px;height:8.5px;background:#f3d9a8;border:1.6px solid #8a4a14;border-radius:2px;box-sizing:border-box"></div><div style="position:absolute;left:295.6px;top:279.1px;width:9.4px;height:9.4px;background:#111;border-radius:50%"></div><div style="position:absolute;left:299.7px;top:281.0px;width:1.3px;height:1.3px;background:#fff"></div><div style="position:absolute;left:299.7px;top:283.0px;width:1.3px;height:3.6px;background:#fff"></div><div style="position:absolute;left:228.8px;top:282.9px;width:6.0px;height:7.0px;background:#d9dde0;border:1px solid #a9b0b5;box-sizing:border-box"></div><span style="position:absolute;left:228.8px;top:292.9px;width:83.5px;overflow:hidden;font-size:8.3px;line-height:10px;color:#222;white-space:pre">KUI_27214_head.JPG</span><div style="position:absolute;left:312.9px;top:276.4px;width:93.0px;height:71.0px;background:#fff;box-shadow:0 2px 3px rgba(0,0,0,.11)"></div><div style="position:absolute;left:315.4px;top:279.4px;width:8.5px;height:8.5px;background:#f3d9a8;border:1.6px solid #8a4a14;border-radius:2px;box-sizing:border-box"></div><div style="position:absolute;left:395.2px;top:279.1px;width:9.4px;height:9.4px;background:#111;border-radius:50%"></div><div style="position:absolute;left:399.3px;top:281.0px;width:1.3px;height:1.3px;background:#fff"></div><div style="position:absolute;left:399.3px;top:283.0px;width:1.3px;height:3.6px;background:#fff"></div><div style="position:absolute;left:328.4px;top:282.9px;width:6.0px;height:7.0px;background:#d9dde0;border:1px solid #a9b0b5;box-sizing:border-box"></div><span style="position:absolute;left:328.4px;top:292.9px;width:83.5px;overflow:hidden;font-size:8.3px;line-height:10px;color:#222;white-space:pre">KUI_27214_caudal.JP</span><div style="position:absolute;left:412.6px;top:276.4px;width:93.0px;height:71.0px;background:#fff;box-shadow:0 2px 3px rgba(0,0,0,.11)"></div><div style="position:absolute;left:415.1px;top:279.4px;width:8.5px;height:8.5px;background:#f3d9a8;border:1.6px solid #8a4a14;border-radius:2px;box-sizing:border-box"></div><div style="position:absolute;left:494.9px;top:279.1px;width:9.4px;height:9.4px;background:#111;border-radius:50%"></div><div style="position:absolute;left:499.0px;top:281.0px;width:1.3px;height:1.3px;background:#fff"></div><div style="position:absolute;left:499.0px;top:283.0px;width:1.3px;height:3.6px;background:#fff"></div><div style="position:absolute;left:428.1px;top:282.9px;width:6.0px;height:7.0px;background:#d9dde0;border:1px solid #a9b0b5;box-sizing:border-box"></div><span style="position:absolute;left:428.1px;top:292.9px;width:83.5px;overflow:hidden;font-size:8.3px;line-height:10px;color:#222;white-space:pre">KUI_27214.JPG</span><div style="position:absolute;left:512.2px;top:276.4px;width:93.0px;height:71.0px;background:#fff;box-shadow:0 2px 3px rgba(0,0,0,.11)"></div><div style="position:absolute;left:514.8px;top:279.4px;width:8.5px;height:8.5px;background:#f3d9a8;border:1.6px solid #8a4a14;border-radius:2px;box-sizing:border-box"></div><div style="position:absolute;left:594.6px;top:279.1px;width:9.4px;height:9.4px;background:#111;border-radius:50%"></div><div style="position:absolute;left:598.7px;top:281.0px;width:1.3px;height:1.3px;background:#fff"></div><div style="position:absolute;left:598.7px;top:283.0px;width:1.3px;height:3.6px;background:#fff"></div><div style="position:absolute;left:527.8px;top:282.9px;width:6.0px;height:7.0px;background:#d9dde0;border:1px solid #a9b0b5;box-sizing:border-box"></div><span style="position:absolute;left:527.8px;top:292.9px;width:83.5px;overflow:hidden;font-size:8.3px;line-height:10px;color:#222;white-space:pre">KUI_27102_head.JPG</span><div style="position:absolute;left:611.9px;top:276.4px;width:93.0px;height:71.0px;background:#fff;box-shadow:0 2px 3px rgba(0,0,0,.11)"></div><div style="position:absolute;left:614.4px;top:279.4px;width:8.5px;height:8.5px;background:#f3d9a8;border:1.6px solid #8a4a14;border-radius:2px;box-sizing:border-box"></div><div style="position:absolute;left:694.2px;top:279.1px;width:9.4px;height:9.4px;background:#111;border-radius:50%"></div><div style="position:absolute;left:698.3px;top:281.0px;width:1.3px;height:1.3px;background:#fff"></div><div style="position:absolute;left:698.3px;top:283.0px;width:1.3px;height:3.6px;background:#fff"></div><div style="position:absolute;left:627.4px;top:282.9px;width:6.0px;height:7.0px;background:#d9dde0;border:1px solid #a9b0b5;box-sizing:border-box"></div><span style="position:absolute;left:627.4px;top:292.9px;width:83.5px;overflow:hidden;font-size:8.3px;line-height:10px;color:#222;white-space:pre">KUI_27102_caudal.JP</span><div style="position:absolute;left:14.0px;top:355.8px;width:93.0px;height:71.0px;background:#fff;box-shadow:0 2px 3px rgba(0,0,0,.11)"></div><div style="position:absolute;left:16.5px;top:358.8px;width:8.5px;height:8.5px;background:#f3d9a8;border:1.6px solid #8a4a14;border-radius:2px;box-sizing:border-box"></div><div style="position:absolute;left:96.3px;top:358.5px;width:9.4px;height:9.4px;background:#111;border-radius:50%"></div><div style="position:absolute;left:100.4px;top:360.4px;width:1.3px;height:1.3px;background:#fff"></div><div style="position:absolute;left:100.4px;top:362.4px;width:1.3px;height:3.6px;background:#fff"></div><div style="position:absolute;left:29.5px;top:362.3px;width:6.0px;height:7.0px;background:#d9dde0;border:1px solid #a9b0b5;box-sizing:border-box"></div><span style="position:absolute;left:29.5px;top:372.3px;width:83.5px;overflow:hidden;font-size:8.3px;line-height:10px;color:#222;white-space:pre">KUI_27102.JPG</span><div style="position:absolute;left:113.7px;top:355.8px;width:93.0px;height:71.0px;background:#fff;box-shadow:0 2px 3px rgba(0,0,0,.11)"></div><div style="position:absolute;left:116.2px;top:358.8px;width:8.5px;height:8.5px;background:#f3d9a8;border:1.6px solid #8a4a14;border-radius:2px;box-sizing:border-box"></div><div style="position:absolute;left:196.0px;top:358.5px;width:9.4px;height:9.4px;background:#111;border-radius:50%"></div><div style="position:absolute;left:200.1px;top:360.4px;width:1.3px;height:1.3px;background:#fff"></div><div style="position:absolute;left:200.1px;top:362.4px;width:1.3px;height:3.6px;background:#fff"></div><div style="position:absolute;left:129.2px;top:362.3px;width:6.0px;height:7.0px;background:#d9dde0;border:1px solid #a9b0b5;box-sizing:border-box"></div><span style="position:absolute;left:129.2px;top:372.3px;width:83.5px;overflow:hidden;font-size:8.3px;line-height:10px;color:#222;white-space:pre">KUI_27074_head.JPG</span><div style="position:absolute;left:213.3px;top:355.8px;width:93.0px;height:71.0px;background:#fff;box-shadow:0 2px 3px rgba(0,0,0,.11)"></div><div style="position:absolute;left:215.8px;top:358.8px;width:8.5px;height:8.5px;background:#f3d9a8;border:1.6px solid #8a4a14;border-radius:2px;box-sizing:border-box"></div><div style="position:absolute;left:295.6px;top:358.5px;width:9.4px;height:9.4px;background:#111;border-radius:50%"></div><div style="position:absolute;left:299.7px;top:360.4px;width:1.3px;height:1.3px;background:#fff"></div><div style="position:absolute;left:299.7px;top:362.4px;width:1.3px;height:3.6px;background:#fff"></div><div style="position:absolute;left:228.8px;top:362.3px;width:6.0px;height:7.0px;background:#d9dde0;border:1px solid #a9b0b5;box-sizing:border-box"></div><span style="position:absolute;left:228.8px;top:372.3px;width:83.5px;overflow:hidden;font-size:8.3px;line-height:10px;color:#222;white-space:pre">KUI_27074_caudal.JP</span><div style="position:absolute;left:312.9px;top:355.8px;width:93.0px;height:71.0px;background:#fff;box-shadow:0 2px 3px rgba(0,0,0,.11)"></div><div style="position:absolute;left:315.4px;top:358.8px;width:8.5px;height:8.5px;background:#f3d9a8;border:1.6px solid #8a4a14;border-radius:2px;box-sizing:border-box"></div><div style="position:absolute;left:395.2px;top:358.5px;width:9.4px;height:9.4px;background:#111;border-radius:50%"></div><div style="position:absolute;left:399.3px;top:360.4px;width:1.3px;height:1.3px;background:#fff"></div><div style="position:absolute;left:399.3px;top:362.4px;width:1.3px;height:3.6px;background:#fff"></div><div style="position:absolute;left:328.4px;top:362.3px;width:6.0px;height:7.0px;background:#d9dde0;border:1px solid #a9b0b5;box-sizing:border-box"></div><span style="position:absolute;left:328.4px;top:372.3px;width:83.5px;overflow:hidden;font-size:8.3px;line-height:10px;color:#222;white-space:pre">KUI_27074.JPG</span><div style="position:absolute;left:412.6px;top:355.8px;width:93.0px;height:71.0px;background:#fff;box-shadow:0 2px 3px rgba(0,0,0,.11)"></div><div style="position:absolute;left:415.1px;top:358.8px;width:8.5px;height:8.5px;background:#f3d9a8;border:1.6px solid #8a4a14;border-radius:2px;box-sizing:border-box"></div><div style="position:absolute;left:494.9px;top:358.5px;width:9.4px;height:9.4px;background:#111;border-radius:50%"></div><div style="position:absolute;left:499.0px;top:360.4px;width:1.3px;height:1.3px;background:#fff"></div><div style="position:absolute;left:499.0px;top:362.4px;width:1.3px;height:3.6px;background:#fff"></div><div style="position:absolute;left:428.1px;top:362.3px;width:6.0px;height:7.0px;background:#d9dde0;border:1px solid #a9b0b5;box-sizing:border-box"></div><span style="position:absolute;left:428.1px;top:372.3px;width:83.5px;overflow:hidden;font-size:8.3px;line-height:10px;color:#222;white-space:pre">KUI_17270_head.JPG</span><div style="position:absolute;left:512.2px;top:355.8px;width:93.0px;height:71.0px;background:#fff;box-shadow:0 2px 3px rgba(0,0,0,.11)"></div><div style="position:absolute;left:514.8px;top:358.8px;width:8.5px;height:8.5px;background:#f3d9a8;border:1.6px solid #8a4a14;border-radius:2px;box-sizing:border-box"></div><div style="position:absolute;left:594.6px;top:358.5px;width:9.4px;height:9.4px;background:#111;border-radius:50%"></div><div style="position:absolute;left:598.7px;top:360.4px;width:1.3px;height:1.3px;background:#fff"></div><div style="position:absolute;left:598.7px;top:362.4px;width:1.3px;height:3.6px;background:#fff"></div><div style="position:absolute;left:527.8px;top:362.3px;width:6.0px;height:7.0px;background:#d9dde0;border:1px solid #a9b0b5;box-sizing:border-box"></div><span style="position:absolute;left:527.8px;top:372.3px;width:83.5px;overflow:hidden;font-size:8.3px;line-height:10px;color:#222;white-space:pre">KUI_17270_caudal.JPG</span><div style="position:absolute;left:611.9px;top:355.8px;width:93.0px;height:71.0px;background:#fff;box-shadow:0 2px 3px rgba(0,0,0,.11)"></div><div style="position:absolute;left:614.4px;top:358.8px;width:8.5px;height:8.5px;background:#f3d9a8;border:1.6px solid #8a4a14;border-radius:2px;box-sizing:border-box"></div><div style="position:absolute;left:694.2px;top:358.5px;width:9.4px;height:9.4px;background:#111;border-radius:50%"></div><div style="position:absolute;left:698.3px;top:360.4px;width:1.3px;height:1.3px;background:#fff"></div><div style="position:absolute;left:698.3px;top:362.4px;width:1.3px;height:3.6px;background:#fff"></div><div style="position:absolute;left:627.4px;top:362.3px;width:6.0px;height:7.0px;background:#d9dde0;border:1px solid #a9b0b5;box-sizing:border-box"></div><span style="position:absolute;left:627.4px;top:372.3px;width:83.5px;overflow:hidden;font-size:8.3px;line-height:10px;color:#222;white-space:pre">KUI_17270.JPG</span><div style="position:absolute;left:14.0px;top:435.2px;width:93.0px;height:71.0px;background:#fff;box-shadow:0 2px 3px rgba(0,0,0,.11)"></div><div style="position:absolute;left:16.5px;top:438.2px;width:8.5px;height:8.5px;background:#4b2e83;border-radius:2px"></div><div style="position:absolute;left:96.3px;top:437.9px;width:9.4px;height:9.4px;background:#111;border-radius:50%"></div><div style="position:absolute;left:100.4px;top:439.8px;width:1.3px;height:1.3px;background:#fff"></div><div style="position:absolute;left:100.4px;top:441.8px;width:1.3px;height:3.6px;background:#fff"></div><div style="position:absolute;left:29.5px;top:441.7px;width:6.0px;height:7.0px;background:#d9dde0;border:1px solid #a9b0b5;box-sizing:border-box"></div><span style="position:absolute;left:29.5px;top:451.7px;width:83.5px;overflow:hidden;font-size:8.3px;line-height:10px;color:#222;white-space:pre">Fusilier_&amp;_Edds_1993</span><div style="position:absolute;left:113.7px;top:435.2px;width:93.0px;height:71.0px;background:#fff;box-shadow:0 2px 3px rgba(0,0,0,.11)"></div><div style="position:absolute;left:116.2px;top:438.2px;width:8.5px;height:8.5px;background:#4b2e83;border-radius:2px"></div><div style="position:absolute;left:196.0px;top:437.9px;width:9.4px;height:9.4px;background:#111;border-radius:50%"></div><div style="position:absolute;left:200.1px;top:439.8px;width:1.3px;height:1.3px;background:#fff"></div><div style="position:absolute;left:200.1px;top:441.8px;width:1.3px;height:3.6px;background:#fff"></div><div style="position:absolute;left:129.2px;top:441.7px;width:6.0px;height:7.0px;background:#d9dde0;border:1px solid #a9b0b5;box-sizing:border-box"></div><span style="position:absolute;left:129.2px;top:451.7px;width:83.5px;overflow:hidden;font-size:8.3px;line-height:10px;color:#222;white-space:pre">Branson_1963</span><div style="position:absolute;left:213.3px;top:435.2px;width:93.0px;height:71.0px;background:#fff;box-shadow:0 2px 3px rgba(0,0,0,.11)"></div><div style="position:absolute;left:215.8px;top:438.2px;width:8.5px;height:8.5px;background:#c4202b;border-radius:2px"></div><div style="position:absolute;left:295.6px;top:437.9px;width:9.4px;height:9.4px;background:#111;border-radius:50%"></div><div style="position:absolute;left:299.7px;top:439.8px;width:1.3px;height:1.3px;background:#fff"></div><div style="position:absolute;left:299.7px;top:441.8px;width:1.3px;height:3.6px;background:#fff"></div><div style="position:absolute;left:228.8px;top:441.7px;width:6.0px;height:7.0px;background:#d9dde0;border:1px solid #a9b0b5;box-sizing:border-box"></div><span style="position:absolute;left:228.8px;top:451.7px;width:83.5px;overflow:hidden;font-size:8.3px;line-height:10px;color:#222;white-space:pre">Schwarzhans_et_al_2</span><div style="position:absolute;left:312.9px;top:435.2px;width:93.0px;height:71.0px;background:#fff;box-shadow:0 2px 3px rgba(0,0,0,.11)"></div><div style="position:absolute;left:315.4px;top:438.2px;width:8.5px;height:8.5px;background:#4b2e83;border-radius:2px"></div><div style="position:absolute;left:395.2px;top:437.9px;width:9.4px;height:9.4px;background:#111;border-radius:50%"></div><div style="position:absolute;left:399.3px;top:439.8px;width:1.3px;height:1.3px;background:#fff"></div><div style="position:absolute;left:399.3px;top:441.8px;width:1.3px;height:3.6px;background:#fff"></div><div style="position:absolute;left:328.4px;top:441.7px;width:6.0px;height:7.0px;background:#d9dde0;border:1px solid #a9b0b5;box-sizing:border-box"></div><span style="position:absolute;left:328.4px;top:451.7px;width:83.5px;overflow:hidden;font-size:8.3px;line-height:10px;color:#222;white-space:pre">Ghezelayagh_et_al_2(</span><div style="position:absolute;left:412.6px;top:435.2px;width:93.0px;height:71.0px;background:#fff;box-shadow:0 2px 3px rgba(0,0,0,.11)"></div><div style="position:absolute;left:415.1px;top:438.2px;width:8.5px;height:8.5px;background:#3b5fc4;border-radius:2px"></div><div style="position:absolute;left:494.9px;top:437.9px;width:9.4px;height:9.4px;background:#111;border-radius:50%"></div><div style="position:absolute;left:499.0px;top:439.8px;width:1.3px;height:1.3px;background:#fff"></div><div style="position:absolute;left:499.0px;top:441.8px;width:1.3px;height:3.6px;background:#fff"></div><div style="position:absolute;left:428.1px;top:441.7px;width:6.0px;height:7.0px;background:#d9dde0;border:1px solid #a9b0b5;box-sizing:border-box"></div><span style="position:absolute;left:435.1px;top:442.2px;font-size:8.3px;line-height:10.0px;color:#222;white-space:pre;">Martin - MCZ</span><span style="position:absolute;left:428.1px;top:454.7px;font-size:8.3px;line-height:10.0px;color:#222;white-space:pre;">2022-17-Ich</span><div style="position:absolute;left:512.2px;top:435.2px;width:93.0px;height:71.0px;background:#fff;box-shadow:0 2px 3px rgba(0,0,0,.11)"></div><div style="position:absolute;left:514.8px;top:438.2px;width:8.5px;height:8.5px;background:#4b2e83;border-radius:2px"></div><div style="position:absolute;left:594.6px;top:437.9px;width:9.4px;height:9.4px;background:#111;border-radius:50%"></div><div style="position:absolute;left:598.7px;top:439.8px;width:1.3px;height:1.3px;background:#fff"></div><div style="position:absolute;left:598.7px;top:441.8px;width:1.3px;height:3.6px;background:#fff"></div><div style="position:absolute;left:527.8px;top:441.7px;width:6.0px;height:7.0px;background:#d9dde0;border:1px solid #a9b0b5;box-sizing:border-box"></div><span style="position:absolute;left:527.8px;top:451.7px;width:83.5px;overflow:hidden;font-size:8.3px;line-height:10px;color:#222;white-space:pre">Troyer_et_al_2022</span><div style="position:absolute;left:611.9px;top:435.2px;width:93.0px;height:71.0px;background:#fff;box-shadow:0 2px 3px rgba(0,0,0,.11)"></div><div style="position:absolute;left:614.4px;top:438.2px;width:8.5px;height:8.5px;background:#f3d9a8;border:1.6px solid #8a4a14;border-radius:2px;box-sizing:border-box"></div><div style="position:absolute;left:694.2px;top:437.9px;width:9.4px;height:9.4px;background:#111;border-radius:50%"></div><div style="position:absolute;left:698.3px;top:439.8px;width:1.3px;height:1.3px;background:#fff"></div><div style="position:absolute;left:698.3px;top:441.8px;width:1.3px;height:3.6px;background:#fff"></div><div style="position:absolute;left:627.4px;top:441.7px;width:6.0px;height:7.0px;background:#d9dde0;border:1px solid #a9b0b5;box-sizing:border-box"></div><span style="position:absolute;left:634.4px;top:442.2px;font-size:8.3px;line-height:10.0px;color:#222;white-space:pre;">KU 28035</span><span style="position:absolute;left:627.4px;top:454.7px;font-size:8.3px;line-height:10.0px;color:#222;white-space:pre;">#1.jpg</span><div style="position:absolute;left:14.0px;top:514.6px;width:93.0px;height:71.0px;background:#fff;box-shadow:0 2px 3px rgba(0,0,0,.11)"></div><div style="position:absolute;left:16.5px;top:517.6px;width:8.5px;height:8.5px;background:#f3d9a8;border:1.6px solid #8a4a14;border-radius:2px;box-sizing:border-box"></div><div style="position:absolute;left:96.3px;top:517.3px;width:9.4px;height:9.4px;background:#111;border-radius:50%"></div><div style="position:absolute;left:100.4px;top:519.2px;width:1.3px;height:1.3px;background:#fff"></div><div style="position:absolute;left:100.4px;top:521.2px;width:1.3px;height:3.6px;background:#fff"></div><div style="position:absolute;left:29.5px;top:521.1px;width:6.0px;height:7.0px;background:#d9dde0;border:1px solid #a9b0b5;box-sizing:border-box"></div><span style="position:absolute;left:36.5px;top:521.6px;font-size:8.3px;line-height:10.0px;color:#222;white-space:pre;">KU 28023</span><span style="position:absolute;left:29.5px;top:534.1px;font-size:8.3px;line-height:10.0px;color:#222;white-space:pre;">#1.jpg</span><div style="position:absolute;left:113.7px;top:514.6px;width:93.0px;height:71.0px;background:#fff;box-shadow:0 2px 3px rgba(0,0,0,.11)"></div><div style="position:absolute;left:116.2px;top:517.6px;width:8.5px;height:8.5px;background:#f3d9a8;border:1.6px solid #8a4a14;border-radius:2px;box-sizing:border-box"></div><div style="position:absolute;left:196.0px;top:517.3px;width:9.4px;height:9.4px;background:#111;border-radius:50%"></div><div style="position:absolute;left:200.1px;top:519.2px;width:1.3px;height:1.3px;background:#fff"></div><div style="position:absolute;left:200.1px;top:521.2px;width:1.3px;height:3.6px;background:#fff"></div><div style="position:absolute;left:129.2px;top:521.1px;width:6.0px;height:7.0px;background:#d9dde0;border:1px solid #a9b0b5;box-sizing:border-box"></div><span style="position:absolute;left:136.2px;top:521.6px;font-size:8.3px;line-height:10.0px;color:#222;white-space:pre;">KU 18857</span><span style="position:absolute;left:129.2px;top:534.1px;font-size:8.3px;line-height:10.0px;color:#222;white-space:pre;">#2.jpg</span><div style="position:absolute;left:213.3px;top:514.6px;width:93.0px;height:71.0px;background:#fff;box-shadow:0 2px 3px rgba(0,0,0,.11)"></div><div style="position:absolute;left:215.8px;top:517.6px;width:8.5px;height:8.5px;background:#f3d9a8;border:1.6px solid #8a4a14;border-radius:2px;box-sizing:border-box"></div><div style="position:absolute;left:295.6px;top:517.3px;width:9.4px;height:9.4px;background:#111;border-radius:50%"></div><div style="position:absolute;left:299.7px;top:519.2px;width:1.3px;height:1.3px;background:#fff"></div><div style="position:absolute;left:299.7px;top:521.2px;width:1.3px;height:3.6px;background:#fff"></div><div style="position:absolute;left:228.8px;top:521.1px;width:6.0px;height:7.0px;background:#d9dde0;border:1px solid #a9b0b5;box-sizing:border-box"></div><span style="position:absolute;left:235.8px;top:521.6px;font-size:8.3px;line-height:10.0px;color:#222;white-space:pre;">KU 15228</span><span style="position:absolute;left:228.8px;top:534.1px;font-size:8.3px;line-height:10.0px;color:#222;white-space:pre;">#1.jpg</span><div style="position:absolute;left:312.9px;top:514.6px;width:93.0px;height:71.0px;background:#fff;box-shadow:0 2px 3px rgba(0,0,0,.11)"></div><div style="position:absolute;left:315.4px;top:517.6px;width:8.5px;height:8.5px;background:#f3d9a8;border:1.6px solid #8a4a14;border-radius:2px;box-sizing:border-box"></div><div style="position:absolute;left:395.2px;top:517.3px;width:9.4px;height:9.4px;background:#111;border-radius:50%"></div><div style="position:absolute;left:399.3px;top:519.2px;width:1.3px;height:1.3px;background:#fff"></div><div style="position:absolute;left:399.3px;top:521.2px;width:1.3px;height:3.6px;background:#fff"></div><div style="position:absolute;left:328.4px;top:521.1px;width:6.0px;height:7.0px;background:#d9dde0;border:1px solid #a9b0b5;box-sizing:border-box"></div><span style="position:absolute;left:335.4px;top:521.6px;font-size:8.3px;line-height:10.0px;color:#222;white-space:pre;">KU 15228</span><span style="position:absolute;left:328.4px;top:534.1px;font-size:8.3px;line-height:10.0px;color:#222;white-space:pre;">#3.jpg</span><div style="position:absolute;left:412.6px;top:514.6px;width:93.0px;height:71.0px;background:#fff;box-shadow:0 2px 3px rgba(0,0,0,.11)"></div><div style="position:absolute;left:415.1px;top:517.6px;width:8.5px;height:8.5px;background:#f3d9a8;border:1.6px solid #8a4a14;border-radius:2px;box-sizing:border-box"></div><div style="position:absolute;left:494.9px;top:517.3px;width:9.4px;height:9.4px;background:#111;border-radius:50%"></div><div style="position:absolute;left:499.0px;top:519.2px;width:1.3px;height:1.3px;background:#fff"></div><div style="position:absolute;left:499.0px;top:521.2px;width:1.3px;height:3.6px;background:#fff"></div><div style="position:absolute;left:428.1px;top:521.1px;width:6.0px;height:7.0px;background:#d9dde0;border:1px solid #a9b0b5;box-sizing:border-box"></div><span style="position:absolute;left:435.1px;top:521.6px;font-size:8.3px;line-height:10.0px;color:#222;white-space:pre;">KU 14184</span><span style="position:absolute;left:428.1px;top:534.1px;font-size:8.3px;line-height:10.0px;color:#222;white-space:pre;">#1.jpg</span><div style="position:absolute;left:512.2px;top:514.6px;width:93.0px;height:71.0px;background:#fff;box-shadow:0 2px 3px rgba(0,0,0,.11)"></div><div style="position:absolute;left:514.8px;top:517.6px;width:8.5px;height:8.5px;background:#f3d9a8;border:1.6px solid #8a4a14;border-radius:2px;box-sizing:border-box"></div><div style="position:absolute;left:594.6px;top:517.3px;width:9.4px;height:9.4px;background:#111;border-radius:50%"></div><div style="position:absolute;left:598.7px;top:519.2px;width:1.3px;height:1.3px;background:#fff"></div><div style="position:absolute;left:598.7px;top:521.2px;width:1.3px;height:3.6px;background:#fff"></div><div style="position:absolute;left:527.8px;top:521.1px;width:6.0px;height:7.0px;background:#d9dde0;border:1px solid #a9b0b5;box-sizing:border-box"></div><span style="position:absolute;left:534.8px;top:521.6px;font-size:8.3px;line-height:10.0px;color:#222;white-space:pre;">KU 12322</span><span style="position:absolute;left:527.8px;top:534.1px;font-size:8.3px;line-height:10.0px;color:#222;white-space:pre;">#3.jpg</span><div style="position:absolute;left:611.9px;top:514.6px;width:93.0px;height:71.0px;background:#fff;box-shadow:0 2px 3px rgba(0,0,0,.11)"></div><div style="position:absolute;left:614.4px;top:517.6px;width:8.5px;height:8.5px;background:#f3d9a8;border:1.6px solid #8a4a14;border-radius:2px;box-sizing:border-box"></div><div style="position:absolute;left:694.2px;top:517.3px;width:9.4px;height:9.4px;background:#111;border-radius:50%"></div><div style="position:absolute;left:698.3px;top:519.2px;width:1.3px;height:1.3px;background:#fff"></div><div style="position:absolute;left:698.3px;top:521.2px;width:1.3px;height:3.6px;background:#fff"></div><div style="position:absolute;left:627.4px;top:521.1px;width:6.0px;height:7.0px;background:#d9dde0;border:1px solid #a9b0b5;box-sizing:border-box"></div><span style="position:absolute;left:634.4px;top:521.6px;font-size:8.3px;line-height:10.0px;color:#222;white-space:pre;">KU 12322</span><span style="position:absolute;left:627.4px;top:534.1px;font-size:8.3px;line-height:10.0px;color:#222;white-space:pre;">#1.jpg</span><div style="position:absolute;left:14.0px;top:594.0px;width:93.0px;height:71.0px;background:#fff;box-shadow:0 2px 3px rgba(0,0,0,.11)"></div><div style="position:absolute;left:16.5px;top:597.0px;width:8.5px;height:8.5px;background:#f3d9a8;border:1.6px solid #8a4a14;border-radius:2px;box-sizing:border-box"></div><div style="position:absolute;left:96.3px;top:596.7px;width:9.4px;height:9.4px;background:#111;border-radius:50%"></div><div style="position:absolute;left:100.4px;top:598.6px;width:1.3px;height:1.3px;background:#fff"></div><div style="position:absolute;left:100.4px;top:600.6px;width:1.3px;height:3.6px;background:#fff"></div><div style="position:absolute;left:29.5px;top:600.5px;width:6.0px;height:7.0px;background:#d9dde0;border:1px solid #a9b0b5;box-sizing:border-box"></div><span style="position:absolute;left:36.5px;top:601.0px;font-size:8.3px;line-height:10.0px;color:#222;white-space:pre;">KU 10007</span><span style="position:absolute;left:29.5px;top:613.5px;font-size:8.3px;line-height:10.0px;color:#222;white-space:pre;">#7.jpg</span><div style="position:absolute;left:113.7px;top:594.0px;width:93.0px;height:71.0px;background:#fff;box-shadow:0 2px 3px rgba(0,0,0,.11)"></div><div style="position:absolute;left:116.2px;top:597.0px;width:8.5px;height:8.5px;background:#f3d9a8;border:1.6px solid #8a4a14;border-radius:2px;box-sizing:border-box"></div><div style="position:absolute;left:196.0px;top:596.7px;width:9.4px;height:9.4px;background:#111;border-radius:50%"></div><div style="position:absolute;left:200.1px;top:598.6px;width:1.3px;height:1.3px;background:#fff"></div><div style="position:absolute;left:200.1px;top:600.6px;width:1.3px;height:3.6px;background:#fff"></div><div style="position:absolute;left:129.2px;top:600.5px;width:6.0px;height:7.0px;background:#d9dde0;border:1px solid #a9b0b5;box-sizing:border-box"></div><span style="position:absolute;left:136.2px;top:601.0px;font-size:8.3px;line-height:10.0px;color:#222;white-space:pre;">KU 10007</span><span style="position:absolute;left:129.2px;top:613.5px;font-size:8.3px;line-height:10.0px;color:#222;white-space:pre;">#6.jpg</span><div style="position:absolute;left:213.3px;top:594.0px;width:93.0px;height:71.0px;background:#fff;box-shadow:0 2px 3px rgba(0,0,0,.11)"></div><div style="position:absolute;left:215.8px;top:597.0px;width:8.5px;height:8.5px;background:#f3d9a8;border:1.6px solid #8a4a14;border-radius:2px;box-sizing:border-box"></div><div style="position:absolute;left:295.6px;top:596.7px;width:9.4px;height:9.4px;background:#111;border-radius:50%"></div><div style="position:absolute;left:299.7px;top:598.6px;width:1.3px;height:1.3px;background:#fff"></div><div style="position:absolute;left:299.7px;top:600.6px;width:1.3px;height:3.6px;background:#fff"></div><div style="position:absolute;left:228.8px;top:600.5px;width:6.0px;height:7.0px;background:#d9dde0;border:1px solid #a9b0b5;box-sizing:border-box"></div><span style="position:absolute;left:235.8px;top:601.0px;font-size:8.3px;line-height:10.0px;color:#222;white-space:pre;">KU 10007</span><span style="position:absolute;left:228.8px;top:613.5px;font-size:8.3px;line-height:10.0px;color:#222;white-space:pre;">#5.jpg</span><div style="position:absolute;left:312.9px;top:594.0px;width:93.0px;height:71.0px;background:#fff;box-shadow:0 2px 3px rgba(0,0,0,.11)"></div><div style="position:absolute;left:315.4px;top:597.0px;width:8.5px;height:8.5px;background:#f3d9a8;border:1.6px solid #8a4a14;border-radius:2px;box-sizing:border-box"></div><div style="position:absolute;left:395.2px;top:596.7px;width:9.4px;height:9.4px;background:#111;border-radius:50%"></div><div style="position:absolute;left:399.3px;top:598.6px;width:1.3px;height:1.3px;background:#fff"></div><div style="position:absolute;left:399.3px;top:600.6px;width:1.3px;height:3.6px;background:#fff"></div><div style="position:absolute;left:328.4px;top:600.5px;width:6.0px;height:7.0px;background:#d9dde0;border:1px solid #a9b0b5;box-sizing:border-box"></div><span style="position:absolute;left:335.4px;top:601.0px;font-size:8.3px;line-height:10.0px;color:#222;white-space:pre;">KU 10007</span><span style="position:absolute;left:328.4px;top:613.5px;font-size:8.3px;line-height:10.0px;color:#222;white-space:pre;">#4.jpg</span><div style="position:absolute;left:412.6px;top:594.0px;width:93.0px;height:71.0px;background:#fff;box-shadow:0 2px 3px rgba(0,0,0,.11)"></div><div style="position:absolute;left:415.1px;top:597.0px;width:8.5px;height:8.5px;background:#f3d9a8;border:1.6px solid #8a4a14;border-radius:2px;box-sizing:border-box"></div><div style="position:absolute;left:494.9px;top:596.7px;width:9.4px;height:9.4px;background:#111;border-radius:50%"></div><div style="position:absolute;left:499.0px;top:598.6px;width:1.3px;height:1.3px;background:#fff"></div><div style="position:absolute;left:499.0px;top:600.6px;width:1.3px;height:3.6px;background:#fff"></div><div style="position:absolute;left:428.1px;top:600.5px;width:6.0px;height:7.0px;background:#d9dde0;border:1px solid #a9b0b5;box-sizing:border-box"></div><span style="position:absolute;left:435.1px;top:601.0px;font-size:8.3px;line-height:10.0px;color:#222;white-space:pre;">KU 10007</span><span style="position:absolute;left:428.1px;top:613.5px;font-size:8.3px;line-height:10.0px;color:#222;white-space:pre;">#3.jpg</span><div style="position:absolute;left:512.2px;top:594.0px;width:93.0px;height:71.0px;background:#fff;box-shadow:0 2px 3px rgba(0,0,0,.11)"></div><div style="position:absolute;left:514.8px;top:597.0px;width:8.5px;height:8.5px;background:#f3d9a8;border:1.6px solid #8a4a14;border-radius:2px;box-sizing:border-box"></div><div style="position:absolute;left:594.6px;top:596.7px;width:9.4px;height:9.4px;background:#111;border-radius:50%"></div><div style="position:absolute;left:598.7px;top:598.6px;width:1.3px;height:1.3px;background:#fff"></div><div style="position:absolute;left:598.7px;top:600.6px;width:1.3px;height:3.6px;background:#fff"></div><div style="position:absolute;left:527.8px;top:600.5px;width:6.0px;height:7.0px;background:#d9dde0;border:1px solid #a9b0b5;box-sizing:border-box"></div><span style="position:absolute;left:534.8px;top:601.0px;font-size:8.3px;line-height:10.0px;color:#222;white-space:pre;">KU 10007</span><span style="position:absolute;left:527.8px;top:613.5px;font-size:8.3px;line-height:10.0px;color:#222;white-space:pre;">#2.jpg</span><div style="position:absolute;left:611.9px;top:594.0px;width:93.0px;height:71.0px;background:#fff;box-shadow:0 2px 3px rgba(0,0,0,.11)"></div><div style="position:absolute;left:614.4px;top:597.0px;width:8.5px;height:8.5px;background:#f3d9a8;border:1.6px solid #8a4a14;border-radius:2px;box-sizing:border-box"></div><div style="position:absolute;left:694.2px;top:596.7px;width:9.4px;height:9.4px;background:#111;border-radius:50%"></div><div style="position:absolute;left:698.3px;top:598.6px;width:1.3px;height:1.3px;background:#fff"></div><div style="position:absolute;left:698.3px;top:600.6px;width:1.3px;height:3.6px;background:#fff"></div><div style="position:absolute;left:627.4px;top:600.5px;width:6.0px;height:7.0px;background:#d9dde0;border:1px solid #a9b0b5;box-sizing:border-box"></div><span style="position:absolute;left:634.4px;top:601.0px;font-size:8.3px;line-height:10.0px;color:#222;white-space:pre;">KU 10007</span><span style="position:absolute;left:627.4px;top:613.5px;font-size:8.3px;line-height:10.0px;color:#222;white-space:pre;">#1.jpg</span><div style="position:absolute;left:14.0px;top:673.4px;width:93.0px;height:42.0px;background:#fff;box-shadow:0 2px 3px rgba(0,0,0,.11)"></div><div style="position:absolute;left:16.5px;top:676.4px;width:8.5px;height:8.5px;background:#f3d9a8;border:1.6px solid #8a4a14;border-radius:2px;box-sizing:border-box"></div><div style="position:absolute;left:96.3px;top:676.1px;width:9.4px;height:9.4px;background:#111;border-radius:50%"></div><div style="position:absolute;left:100.4px;top:678.0px;width:1.3px;height:1.3px;background:#fff"></div><div style="position:absolute;left:100.4px;top:680.0px;width:1.3px;height:3.6px;background:#fff"></div><div style="position:absolute;left:29.5px;top:679.9px;width:6.0px;height:7.0px;background:#d9dde0;border:1px solid #a9b0b5;box-sizing:border-box"></div><span style="position:absolute;left:36.5px;top:680.4px;font-size:8.3px;line-height:10.0px;color:#222;white-space:pre;">KU 1593</span><span style="position:absolute;left:29.5px;top:692.9px;font-size:8.3px;line-height:10.0px;color:#222;white-space:pre;">#1.jpg</span><div style="position:absolute;left:113.7px;top:673.4px;width:93.0px;height:42.0px;background:#fff;box-shadow:0 2px 3px rgba(0,0,0,.11)"></div><div style="position:absolute;left:116.2px;top:676.4px;width:8.5px;height:8.5px;background:#f3d9a8;border:1.6px solid #8a4a14;border-radius:2px;box-sizing:border-box"></div><div style="position:absolute;left:196.0px;top:676.1px;width:9.4px;height:9.4px;background:#111;border-radius:50%"></div><div style="position:absolute;left:200.1px;top:678.0px;width:1.3px;height:1.3px;background:#fff"></div><div style="position:absolute;left:200.1px;top:680.0px;width:1.3px;height:3.6px;background:#fff"></div><div style="position:absolute;left:129.2px;top:679.9px;width:6.0px;height:7.0px;background:#d9dde0;border:1px solid #a9b0b5;box-sizing:border-box"></div><span style="position:absolute;left:136.2px;top:680.4px;font-size:8.3px;line-height:10.0px;color:#222;white-space:pre;">KU 17407.jpg</span><div style="position:absolute;left:213.3px;top:673.4px;width:93.0px;height:42.0px;background:#fff;box-shadow:0 2px 3px rgba(0,0,0,.11)"></div><div style="position:absolute;left:215.8px;top:676.4px;width:8.5px;height:8.5px;background:#f3d9a8;border:1.6px solid #8a4a14;border-radius:2px;box-sizing:border-box"></div><div style="position:absolute;left:295.6px;top:676.1px;width:9.4px;height:9.4px;background:#111;border-radius:50%"></div><div style="position:absolute;left:299.7px;top:678.0px;width:1.3px;height:1.3px;background:#fff"></div><div style="position:absolute;left:299.7px;top:680.0px;width:1.3px;height:3.6px;background:#fff"></div><div style="position:absolute;left:228.8px;top:679.9px;width:6.0px;height:7.0px;background:#d9dde0;border:1px solid #a9b0b5;box-sizing:border-box"></div><span style="position:absolute;left:235.8px;top:680.4px;font-size:8.3px;line-height:10.0px;color:#222;white-space:pre;">KU</span><span style="position:absolute;left:228.8px;top:692.9px;font-size:8.3px;line-height:10.0px;color:#222;white-space:pre;">12885_1.jpg</span><div style="position:absolute;left:312.9px;top:673.4px;width:93.0px;height:42.0px;background:#fff;box-shadow:0 2px 3px rgba(0,0,0,.11)"></div><div style="position:absolute;left:315.4px;top:676.4px;width:8.5px;height:8.5px;background:#f3d9a8;border:1.6px solid #8a4a14;border-radius:2px;box-sizing:border-box"></div><div style="position:absolute;left:395.2px;top:676.1px;width:9.4px;height:9.4px;background:#111;border-radius:50%"></div><div style="position:absolute;left:399.3px;top:678.0px;width:1.3px;height:1.3px;background:#fff"></div><div style="position:absolute;left:399.3px;top:680.0px;width:1.3px;height:3.6px;background:#fff"></div><div style="position:absolute;left:328.4px;top:679.9px;width:6.0px;height:7.0px;background:#d9dde0;border:1px solid #a9b0b5;box-sizing:border-box"></div><span style="position:absolute;left:335.4px;top:680.4px;font-size:8.3px;line-height:10.0px;color:#222;white-space:pre;">KU</span><span style="position:absolute;left:328.4px;top:692.9px;font-size:8.3px;line-height:10.0px;color:#222;white-space:pre;">9300_2.jpg</span><div style="position:absolute;left:412.6px;top:673.4px;width:93.0px;height:42.0px;background:#fff;box-shadow:0 2px 3px rgba(0,0,0,.11)"></div><div style="position:absolute;left:415.1px;top:676.4px;width:8.5px;height:8.5px;background:#f3d9a8;border:1.6px solid #8a4a14;border-radius:2px;box-sizing:border-box"></div><div style="position:absolute;left:494.9px;top:676.1px;width:9.4px;height:9.4px;background:#111;border-radius:50%"></div><div style="position:absolute;left:499.0px;top:678.0px;width:1.3px;height:1.3px;background:#fff"></div><div style="position:absolute;left:499.0px;top:680.0px;width:1.3px;height:3.6px;background:#fff"></div><div style="position:absolute;left:428.1px;top:679.9px;width:6.0px;height:7.0px;background:#d9dde0;border:1px solid #a9b0b5;box-sizing:border-box"></div><span style="position:absolute;left:435.1px;top:680.4px;font-size:8.3px;line-height:10.0px;color:#222;white-space:pre;">KU</span><span style="position:absolute;left:428.1px;top:692.9px;font-size:8.3px;line-height:10.0px;color:#222;white-space:pre;">9300_1.jpg</span><div style="position:absolute;left:512.2px;top:673.4px;width:93.0px;height:42.0px;background:#fff;box-shadow:0 2px 3px rgba(0,0,0,.11)"></div><div style="position:absolute;left:514.8px;top:676.4px;width:8.5px;height:8.5px;background:#f3d9a8;border:1.6px solid #8a4a14;border-radius:2px;box-sizing:border-box"></div><div style="position:absolute;left:594.6px;top:676.1px;width:9.4px;height:9.4px;background:#111;border-radius:50%"></div><div style="position:absolute;left:598.7px;top:678.0px;width:1.3px;height:1.3px;background:#fff"></div><div style="position:absolute;left:598.7px;top:680.0px;width:1.3px;height:3.6px;background:#fff"></div><div style="position:absolute;left:527.8px;top:679.9px;width:6.0px;height:7.0px;background:#d9dde0;border:1px solid #a9b0b5;box-sizing:border-box"></div><span style="position:absolute;left:534.8px;top:680.4px;font-size:8.3px;line-height:10.0px;color:#222;white-space:pre;">KU</span><span style="position:absolute;left:527.8px;top:692.9px;font-size:8.3px;line-height:10.0px;color:#222;white-space:pre;">9292_2.jpg</span><div style="position:absolute;left:611.9px;top:673.4px;width:93.0px;height:42.0px;background:#fff;box-shadow:0 2px 3px rgba(0,0,0,.11)"></div><div style="position:absolute;left:614.4px;top:676.4px;width:8.5px;height:8.5px;background:#f3d9a8;border:1.6px solid #8a4a14;border-radius:2px;box-sizing:border-box"></div><div style="position:absolute;left:694.2px;top:676.1px;width:9.4px;height:9.4px;background:#111;border-radius:50%"></div><div style="position:absolute;left:698.3px;top:678.0px;width:1.3px;height:1.3px;background:#fff"></div><div style="position:absolute;left:698.3px;top:680.0px;width:1.3px;height:3.6px;background:#fff"></div><div style="position:absolute;left:627.4px;top:679.9px;width:6.0px;height:7.0px;background:#d9dde0;border:1px solid #a9b0b5;box-sizing:border-box"></div><span style="position:absolute;left:634.4px;top:680.4px;font-size:8.3px;line-height:10.0px;color:#222;white-space:pre;">KU</span><span style="position:absolute;left:627.4px;top:692.9px;font-size:8.3px;line-height:10.0px;color:#222;white-space:pre;">9292_1.jpg</span><span style="position:absolute;left:206.5px;top:134.0px;font-size:8.3px;line-height:10.0px;color:#222;white-space:pre;">7(</span><span style="position:absolute;left:405.5px;top:134.0px;font-size:8.3px;line-height:10.0px;color:#222;white-space:pre;">7(</span><div style="position:absolute;left:439.0px;top:123.0px;width:43.0px;height:63.0px;background:linear-gradient(160deg,#fff 30%,#b9bdd8);border:2px solid #3c3fa0;box-sizing:border-box;border-radius:1px"></div><span style="position:absolute;left:440.0px;top:128.6px;font-size:24px;line-height:28.8px;color:#111;white-space:pre;font-weight:700;letter-spacing:-1px">10</span><span style="position:absolute;left:448.0px;top:154.6px;font-size:24px;line-height:28.8px;color:#111;white-space:pre;font-weight:700;letter-spacing:-1px">01</span><div style="position:absolute;left:57.0px;top:84.0px;width:130.5px;height:180.0px;background:#4b4b4d;border-radius:5px;box-shadow:0 3px 10px rgba(0,0,0,.45)"></div><div style="position:absolute;left:60.5px;top:87.8px;width:123.0px;height:13.5px;background:#2f7de1;border-radius:3px"></div><span style="position:absolute;left:63.0px;top:89.5px;font-size:8px;line-height:9.6px;color:#fff;white-space:pre;font-family:&quot;DejaVu Sans&quot;,sans-serif">✓</span><span style="position:absolute;left:74.0px;top:89.3px;font-size:8.3px;line-height:10.0px;color:#fff;white-space:pre;">All (11,974)</span><span style="position:absolute;left:74.0px;top:104.2px;font-size:8px;line-height:9.6px;color:#7d7d80;white-space:pre;">Tables</span><span style="position:absolute;left:83.3px;top:118.3px;font-size:8.3px;line-height:10.0px;color:#e2e2e2;white-space:pre;">Accession (774)</span><span style="position:absolute;left:83.3px;top:132.8px;font-size:8.3px;line-height:10.0px;color:#e2e2e2;white-space:pre;">Borrow (188)</span><span style="position:absolute;left:83.3px;top:147.2px;font-size:8.3px;line-height:10.0px;color:#e2e2e2;white-space:pre;">Collecting Event (2936)</span><span style="position:absolute;left:83.3px;top:161.6px;font-size:8.3px;line-height:10.0px;color:#e2e2e2;white-space:pre;">Collection Object (7132)</span><span style="position:absolute;left:83.3px;top:176.0px;font-size:8.3px;line-height:10.0px;color:#e2e2e2;white-space:pre;">Gift (119)</span><span style="position:absolute;left:83.3px;top:190.5px;font-size:8.3px;line-height:10.0px;color:#e2e2e2;white-space:pre;">Loan (32)</span><span style="position:absolute;left:83.3px;top:204.9px;font-size:8.3px;line-height:10.0px;color:#e2e2e2;white-space:pre;">Permit (13)</span><span style="position:absolute;left:83.3px;top:219.3px;font-size:8.3px;line-height:10.0px;color:#e2e2e2;white-space:pre;">Preparation (2)</span><span style="position:absolute;left:83.3px;top:233.8px;font-size:8.3px;line-height:10.0px;color:#e2e2e2;white-space:pre;">Reference Work (775)</span><span style="position:absolute;left:83.3px;top:248.2px;font-size:8.3px;line-height:10.0px;color:#e2e2e2;white-space:pre;">Taxon (2)</span><div style="position:absolute;left:0.0px;top:716.0px;width:721.0px;height:6.0px;background:linear-gradient(#e3e3e6,#cfcfd3)"></div></div><div class="b" style="left:2738.0px;top:1753.0px;width:821.0px;height:2.0px;background:#e8e8e8"></div><div class="b" style="left:2738.0px;top:1919.5px;width:821.0px;height:2.0px;background:#e8e8e8"></div><div class="b" style="left:3426.2px;top:2006.5px;width:38.0px;height:38.0px;background:#2a3744;border-radius:50%"></div><div class="b" style="left:3463.0px;top:2059.6px;width:38.0px;height:38.0px;background:#2a3744;border-radius:50%"></div><div class="b" style="left:3451.2px;top:2111.6px;width:38.0px;height:38.0px;background:#2a3744;border-radius:50%"></div><div class="b" style="left:3440.0px;top:2164.7px;width:38.0px;height:38.0px;background:#2a3744;border-radius:50%"></div><div class="b" style="left:3597.0px;top:121.5px;width:1.0px;height:1195.0px;background:#d4d4d4"></div><div class="b" style="left:3597.6px;top:1316.0px;width:1.4px;height:931.0px;background:#000"></div><span class="t" style="left:129.00px;top:33.21px;font-size:47px;line-height:47px;color:#c6cad3;font-weight:700;letter-spacing:-1.120px;">Hosted Weblate</span><span class="t" style="left:540.90px;top:38.78px;font-size:37px;line-height:37px;color:#c6cad3;letter-spacing:0.196px;-webkit-text-stroke:0.25px;">Dashboard</span><span class="t" style="left:797.00px;top:38.68px;font-size:37px;line-height:37px;color:#c6cad3;letter-spacing:0.549px;-webkit-text-stroke:0.25px;">Projects</span><span class="t" style="left:1041.00px;top:38.68px;font-size:37px;line-height:37px;color:#c6cad3;letter-spacing:-0.203px;-webkit-text-stroke:0.25px;">Languages</span><span class="t" style="left:1330.00px;top:38.68px;font-size:37px;line-height:37px;color:#c6cad3;letter-spacing:-0.775px;-webkit-text-stroke:0.25px;">Checks</span><span class="t" style="left:3074.80px;top:38.68px;font-size:37px;line-height:37px;color:#c6cad3;letter-spacing:-0.322px;-webkit-text-stroke:0.25px;">Register</span><span class="t" style="left:3285.70px;top:38.68px;font-size:37px;line-height:37px;color:#c6cad3;letter-spacing:-0.176px;-webkit-text-stroke:0.25px;">Sign in</span><span class="t" style="left:118.40px;top:150.68px;font-size:37px;line-height:37px;color:#272d34;letter-spacing:-0.452px;-webkit-text-stroke:0.25px;">Specify 7</span><span class="t" style="left:288.40px;top:147.52px;font-size:49px;line-height:49px;color:#c6c8cb;-webkit-text-stroke:0.25px;">/</span><span class="t" style="left:331.00px;top:150.68px;font-size:37px;line-height:37px;color:#272d34;letter-spacing:0.795px;-webkit-text-stroke:0.25px;">attachments</span><span class="t" style="left:561.40px;top:147.52px;font-size:49px;line-height:49px;color:#c6c8cb;-webkit-text-stroke:0.25px;">/</span><span class="t" style="left:602.00px;top:150.68px;font-size:37px;line-height:37px;color:#272d34;letter-spacing:0.084px;-webkit-text-stroke:0.25px;">French</span><span class="t" style="left:738.30px;top:147.52px;font-size:49px;line-height:49px;color:#c6c8cb;-webkit-text-stroke:0.25px;">/</span><span class="t" style="left:774.00px;top:150.68px;font-size:37px;line-height:37px;color:#272d34;letter-spacing:0.090px;-webkit-text-stroke:0.25px;">Translate</span><span class="t" style="left:3336.70px;top:153.29px;font-size:27.2px;line-height:27.2px;color:#fff;font-family:&quot;DejaVu Sans&quot;, &quot;Liberation Sans&quot;, sans-serif;letter-spacing:-0.055px;text-shadow:0 2.5px 0 rgba(1,1,1,.3);-webkit-text-stroke:0.4px #fff;">translated</span><span class="t" style="left:3488.60px;top:153.29px;font-size:27.2px;line-height:27.2px;color:#fff;font-family:&quot;DejaVu Sans&quot;, &quot;Liberation Sans&quot;, sans-serif;letter-spacing:1.452px;text-shadow:0 2.5px 0 rgba(1,1,1,.3);-webkit-text-stroke:0.4px #fff;">63%</span><span class="t" style="left:282.70px;top:267.68px;font-size:37px;line-height:37px;color:#1fa385;letter-spacing:-0.050px;-webkit-text-stroke:0.25px;">1 / 11</span><span class="t" style="left:699.00px;top:267.68px;font-size:37px;line-height:37px;color:#1fa385;letter-spacing:0.212px;-webkit-text-stroke:0.25px;">All strings</span><span class="t" style="left:1748.00px;top:267.68px;font-size:37px;line-height:37px;color:#1fa385;letter-spacing:0.778px;-webkit-text-stroke:0.25px;">Position and priority</span><span class="t" style="left:3337.00px;top:278.28px;font-size:37px;line-height:37px;color:#272d34;letter-spacing:-1.089px;-webkit-text-stroke:0.25px;">Zen</span><span class="t" style="left:78.20px;top:403.09px;font-size:41px;line-height:41px;color:#272d34;letter-spacing:0.951px;-webkit-text-stroke:0.25px;">Translation</span><span class="t" style="left:77.20px;top:512.38px;font-size:37px;line-height:37px;color:#272d34;letter-spacing:-0.076px;-webkit-text-stroke:0.25px;">English (United States)</span><span class="t" style="left:2266.50px;top:512.55px;font-size:36.8px;line-height:36.8px;color:#272d34;font-weight:700;letter-spacing:-0.035px;">Context</span><span class="t" style="left:2413.00px;top:512.38px;font-size:37px;line-height:37px;color:#272d34;letter-spacing:0.655px;-webkit-text-stroke:0.25px;">attachments</span><span class="t" style="left:121.70px;top:581.90px;font-size:28px;line-height:28px;color:#fff;letter-spacing:-0.162px;font-weight:400;-webkit-text-stroke:0.6px #fff;">Used in: Components &gt; Attachments &gt; Index</span><span class="t" style="left:720.40px;top:581.90px;font-size:28px;line-height:28px;color:#fff;letter-spacing:-0.069px;font-weight:400;-webkit-text-stroke:0.6px #fff;">Components &gt; Header &gt; Menu Item Definitions</span><span class="t" style="left:1350.40px;top:581.90px;font-size:28px;line-height:28px;color:#fff;letter-spacing:-0.095px;font-weight:400;-webkit-text-stroke:0.6px #fff;">Components &gt; Molecules &gt; Attachment Picker</span><span class="t" style="left:1970.00px;top:581.90px;font-size:28px;line-height:28px;color:#fff;letter-spacing:-0.199px;font-weight:400;-webkit-text-stroke:0.6px #fff;">Components &gt; Preferences &gt; User Definitions</span><span class="t" style="left:1155.00px;top:611.50px;font-size:28px;line-height:28px;color:#fff;letter-spacing:-0.287px;font-weight:400;-webkit-text-stroke:0.6px #fff;">Components &gt; Router &gt; Routes</span><span class="t" style="left:104.70px;top:670.82px;font-size:36.6px;line-height:36.6px;color:#272d34;letter-spacing:0.768px;-webkit-text-stroke:0.25px;">Attachments</span><span class="t" style="left:78.00px;top:753.55px;font-size:36.8px;line-height:36.8px;color:#272d34;font-weight:700;letter-spacing:-0.541px;">French</span><span class="t" style="left:2195.80px;top:764.94px;font-size:31.5px;line-height:31.5px;color:#1fa385;letter-spacing:-1.629px;-webkit-text-stroke:0.25px;">NBS</span><span class="t" style="left:2299.90px;top:766.47px;font-size:28.5px;line-height:28.5px;color:#1fa385;transform:translateX(-50%);">…</span><span class="t" style="left:2350.40px;top:766.47px;font-size:28.5px;line-height:28.5px;color:#1fa385;transform:translateX(-50%);">«</span><span class="t" style="left:2391.90px;top:766.47px;font-size:28.5px;line-height:28.5px;color:#1fa385;transform:translateX(-50%);">»</span><span class="t" style="left:2430.70px;top:766.47px;font-size:28.5px;line-height:28.5px;color:#1fa385;transform:translateX(-50%);">‹</span><span class="t" style="left:2466.80px;top:766.47px;font-size:28.5px;line-height:28.5px;color:#1fa385;transform:translateX(-50%);">›</span><span class="t" style="left:2503.50px;top:766.47px;font-size:28.5px;line-height:28.5px;color:#1fa385;transform:translateX(-50%);">-</span><span class="t" style="left:2544.00px;top:766.47px;font-size:28.5px;line-height:28.5px;color:#1fa385;transform:translateX(-50%);">–</span><span class="t" style="left:2593.60px;top:766.47px;font-size:28.5px;line-height:28.5px;color:#1fa385;transform:translateX(-50%);">—</span><span class="t" style="left:99.60px;top:851.38px;font-size:37px;line-height:37px;color:#272d34;letter-spacing:-0.191px;-webkit-text-stroke:0.25px;">Pièces jointes</span><span class="t" style="left:127.40px;top:961.85px;font-size:36.8px;line-height:36.8px;color:#272d34;font-weight:700;letter-spacing:-0.349px;">Needs editing</span><span class="t" style="left:2454.00px;top:960.18px;font-size:30.5px;line-height:30.5px;color:#fff;font-weight:700;letter-spacing:0.701px;">14/110 · 11</span><span class="t" style="left:137.20px;top:1116.25px;font-size:42px;line-height:42px;color:#fff;font-weight:700;letter-spacing:-0.952px;">Save and continue</span><span class="t" style="left:714.00px;top:1116.25px;font-size:42px;line-height:42px;color:#fff;font-weight:700;letter-spacing:-2.199px;">Suggest</span><span class="t" style="left:1101.70px;top:1116.25px;font-size:42px;line-height:42px;color:#fff;font-weight:700;letter-spacing:-0.914px;">Skip</span><span class="t" style="left:77.70px;top:1327.75px;font-size:36.8px;line-height:36.8px;color:#fff;font-weight:700;letter-spacing:-0.685px;">Nearby strings</span><span class="t" style="left:367.50px;top:1331.07px;font-size:33px;line-height:33px;color:#272d34;transform:translateX(-50%);-webkit-text-stroke:0.5px #2a3744;">6</span><span class="t" style="left:485.80px;top:1327.75px;font-size:36.8px;line-height:36.8px;color:#1fa385;font-weight:700;letter-spacing:-0.530px;">Similar keys</span><span class="t" style="left:736.20px;top:1331.07px;font-size:33px;line-height:33px;color:#fff;font-weight:700;transform:translateX(-50%);">5</span><span class="t" style="left:854.60px;top:1327.75px;font-size:36.8px;line-height:36.8px;color:#1fa385;font-weight:700;letter-spacing:-0.563px;">Other languages</span><span class="t" style="left:1178.30px;top:1331.07px;font-size:33px;line-height:33px;color:#fff;font-weight:700;transform:translateX(-50%);">5</span><span class="t" style="left:1296.00px;top:1327.75px;font-size:36.8px;line-height:36.8px;color:#1fa385;font-weight:700;letter-spacing:-0.385px;">History</span><span class="t" style="left:65.40px;top:1476.09px;font-size:37.7px;line-height:37.7px;color:#212529;letter-spacing:-0.385px;-webkit-text-stroke:0.25px;">Context</span><span class="t" style="left:944.00px;top:1476.09px;font-size:37.7px;line-height:37.7px;color:#212529;letter-spacing:-0.267px;-webkit-text-stroke:0.25px;">English (United States)</span><span class="t" style="left:1634.00px;top:1476.09px;font-size:37.7px;line-height:37.7px;color:#212529;letter-spacing:-0.127px;-webkit-text-stroke:0.25px;">French</span><span class="t" style="left:2519.00px;top:1476.09px;font-size:37.7px;line-height:37.7px;color:#212529;letter-spacing:-0.124px;-webkit-text-stroke:0.25px;">Actions</span><span class="t" style="left:90.80px;top:1571.79px;font-size:37.7px;line-height:37.7px;color:#1fa385;letter-spacing:0.375px;-webkit-text-stroke:0.25px;">attachments</span><span class="t" style="left:972.80px;top:1571.79px;font-size:37.7px;line-height:37.7px;color:#1fa385;letter-spacing:0.137px;-webkit-text-stroke:0.25px;">Attachments</span><span class="t" style="left:1659.80px;top:1571.79px;font-size:37.7px;line-height:37.7px;color:#1fa385;letter-spacing:-0.299px;-webkit-text-stroke:0.25px;">Pièces jointes</span><span class="t" style="left:90.80px;top:1675.79px;font-size:37.7px;line-height:37.7px;color:#1fa385;letter-spacing:-1.205px;-webkit-text-stroke:0.25px;">scale</span><span class="t" style="left:971.80px;top:1675.79px;font-size:37.7px;line-height:37.7px;color:#1fa385;letter-spacing:-1.403px;-webkit-text-stroke:0.25px;">Scale</span><span class="t" style="left:1659.80px;top:1675.79px;font-size:37.7px;line-height:37.7px;color:#1fa385;letter-spacing:-0.274px;-webkit-text-stroke:0.25px;">Échelle</span><span class="t" style="left:90.80px;top:1779.79px;font-size:37.7px;line-height:37.7px;color:#1fa385;letter-spacing:0.195px;-webkit-text-stroke:0.25px;">attachmentServerUnavailable</span><span class="t" style="left:972.80px;top:1779.79px;font-size:37.7px;line-height:37.7px;color:#1fa385;letter-spacing:0.036px;-webkit-text-stroke:0.25px;">Attachment server unavailable</span><span class="t" style="left:1661.80px;top:1779.79px;font-size:37.7px;line-height:37.7px;color:#1fa385;letter-spacing:-0.063px;-webkit-text-stroke:0.25px;">Serveur de pièces jointes indisponible</span><span class="t" style="left:90.80px;top:1883.79px;font-size:37.7px;line-height:37.7px;color:#1fa385;letter-spacing:0.220px;-webkit-text-stroke:0.25px;">attachmentServerUnavailableDescription</span><span class="t" style="left:971.80px;top:1883.79px;font-size:37.7px;line-height:37.7px;color:#1fa385;letter-spacing:0.044px;-webkit-text-stroke:0.25px;">Setup your attachment server</span><span class="t" style="left:1661.80px;top:1883.79px;font-size:37.7px;line-height:37.7px;color:#1fa385;letter-spacing:-0.283px;-webkit-text-stroke:0.25px;">Configurez votre serveur de pièces jointes</span><span class="t" style="left:90.80px;top:1987.79px;font-size:37.7px;line-height:37.7px;color:#1fa385;letter-spacing:-0.270px;-webkit-text-stroke:0.25px;">orderBy</span><span class="t" style="left:971.80px;top:1987.79px;font-size:37.7px;line-height:37.7px;color:#1fa385;letter-spacing:-0.992px;-webkit-text-stroke:0.25px;">Order By</span><span class="t" style="left:1662.80px;top:1987.79px;font-size:37.7px;line-height:37.7px;color:#1fa385;letter-spacing:-0.181px;-webkit-text-stroke:0.25px;">Trier par</span><span class="t" style="left:89.80px;top:2091.79px;font-size:37.7px;line-height:37.7px;color:#1fa385;letter-spacing:0.707px;-webkit-text-stroke:0.25px;">uploadingInline</span><span class="t" style="left:970.80px;top:2091.79px;font-size:37.7px;line-height:37.7px;color:#1fa385;letter-spacing:1.031px;-webkit-text-stroke:0.25px;">Uploading…</span><span class="t" style="left:1659.80px;top:2091.79px;font-size:37.7px;line-height:37.7px;color:#1fa385;letter-spacing:-0.185px;-webkit-text-stroke:0.25px;">Envoi en cours…</span><span class="t" style="left:2774.60px;top:402.59px;font-size:41px;line-height:41px;color:#272d34;letter-spacing:-0.108px;-webkit-text-stroke:0.25px;">Glossary</span><span class="t" style="left:2750.40px;top:498.20px;font-size:32.6px;line-height:32.6px;color:#272d34;font-weight:700;letter-spacing:-0.779px;">English (United States)</span><span class="t" style="left:3116.00px;top:498.20px;font-size:32.6px;line-height:32.6px;color:#272d34;font-weight:700;letter-spacing:-1.143px;">French</span><span class="t" style="left:2750.60px;top:576.19px;font-size:32.5px;line-height:32.5px;color:#272d34;letter-spacing:0.361px;-webkit-text-stroke:0.25px;">Attachments</span><span class="t" style="left:3116.00px;top:576.19px;font-size:32.5px;line-height:32.5px;color:#272d34;letter-spacing:-0.175px;-webkit-text-stroke:0.25px;">Pièces jointes</span><span class="t" style="left:3356.60px;top:579.71px;font-size:25.5px;line-height:25.5px;color:#000;font-weight:700;letter-spacing:-1.211px;">Specify 7</span><span class="t" style="left:2750.00px;top:653.09px;font-size:32.5px;line-height:32.5px;color:#272d34;letter-spacing:0.132px;font-style:italic;-webkit-text-stroke:0.25px;">File attachment</span><span class="t" style="left:2775.60px;top:800.09px;font-size:41px;line-height:41px;color:#272d34;letter-spacing:1.352px;-webkit-text-stroke:0.25px;">String information</span><span class="t" style="left:2776.60px;top:914.10px;font-size:32.6px;line-height:32.6px;color:#272d34;font-weight:700;letter-spacing:-0.970px;">Screenshot context</span><span class="t" style="left:2775.90px;top:1794.40px;font-size:32.6px;line-height:32.6px;color:#272d34;font-weight:700;letter-spacing:-0.919px;">Context</span><span class="t" style="left:2776.40px;top:1840.19px;font-size:32.5px;line-height:32.5px;color:#272d34;letter-spacing:0.471px;-webkit-text-stroke:0.25px;">attachments</span><span class="t" style="left:2776.90px;top:1961.60px;font-size:32.6px;line-height:32.6px;color:#272d34;font-weight:700;letter-spacing:-0.880px;">Source string description</span><span class="t" style="left:2776.20px;top:2006.99px;font-size:32.5px;line-height:32.5px;color:#272d34;letter-spacing:-0.170px;-webkit-text-stroke:0.25px;">Used in: Components &gt; Attachments &gt; Index</span><span class="t" style="left:2776.50px;top:2059.59px;font-size:32.5px;line-height:32.5px;color:#272d34;letter-spacing:-0.076px;-webkit-text-stroke:0.25px;">Components &gt; Header &gt; Menu Item Definitions</span><span class="t" style="left:2776.50px;top:2113.19px;font-size:32.5px;line-height:32.5px;color:#272d34;letter-spacing:-0.094px;-webkit-text-stroke:0.25px;">Components &gt; Molecules &gt; Attachment Picker</span><span class="t" style="left:2776.50px;top:2164.79px;font-size:32.5px;line-height:32.5px;color:#272d34;letter-spacing:-0.236px;-webkit-text-stroke:0.25px;">Components &gt; Preferences &gt; User Definitions</span><span class="t" style="left:2776.50px;top:2218.39px;font-size:32.5px;line-height:32.5px;color:#272d34;letter-spacing:-0.397px;-webkit-text-stroke:0.25px;">Components &gt; Router &gt; Routes</span></div></body></html>
